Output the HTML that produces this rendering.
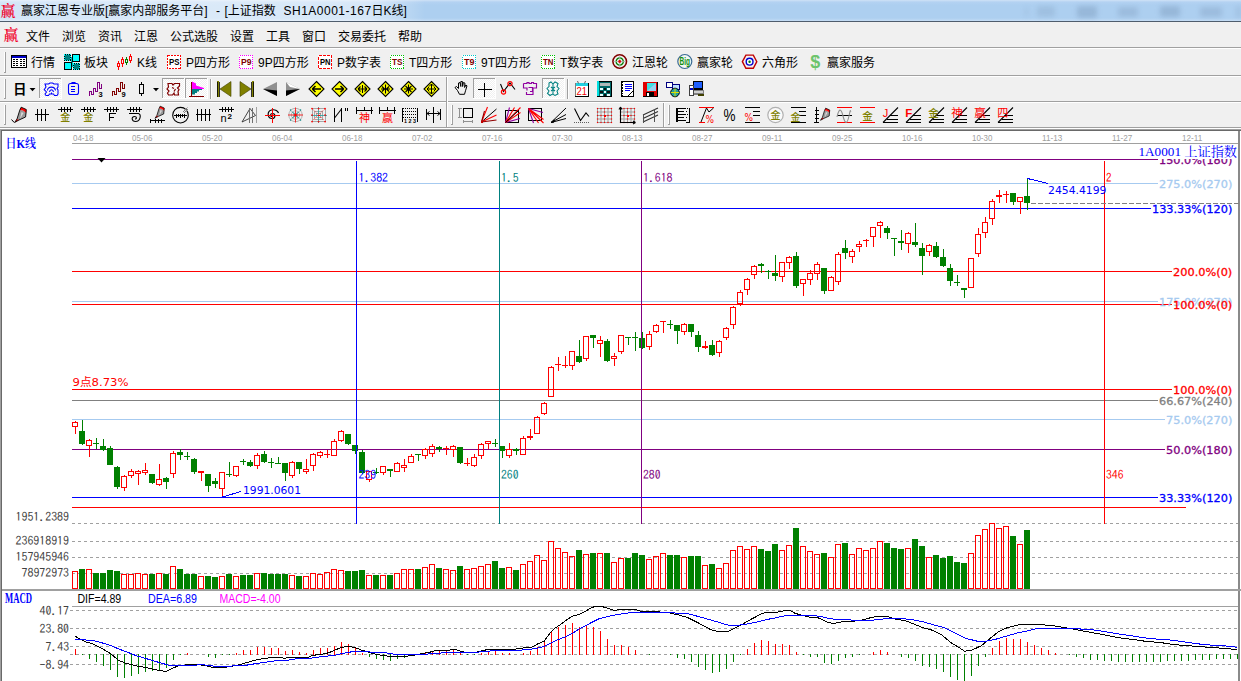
<!DOCTYPE html><html lang="zh"><head><meta charset="utf-8"><title>赢家江恩专业版</title><style>

html,body{margin:0;padding:0;background:#f0f0f0;}
body{width:1241px;height:681px;overflow:hidden;position:relative;font-family:"Liberation Sans","Noto Sans CJK SC",sans-serif;font-size:12px;color:#000;}
.abs{position:absolute;white-space:nowrap;}
#title{left:0;top:0;width:1241px;height:21px;background:linear-gradient(#cfe2f6 0px,#b4d2f2 2px,#adcff0 5px,#adcff0 18px,#bbd7f3 20px,#c9dff5 21px);}
#tline{left:0;top:21px;width:1241px;height:1px;background:#4f5d6d;}
#glow{left:0;top:0;width:440px;height:21px;background:linear-gradient(to right,rgba(255,255,255,.45) 0,rgba(255,255,255,.55) 200px,rgba(255,255,255,.5) 370px,rgba(255,255,255,0) 425px);}
.t{font-size:12px;line-height:14px;height:14px;}
.sep{left:0;width:1241px;height:1px;}
svg{position:absolute;left:0;top:0;}
svg text{white-space:pre;}

</style></head><body>
<div class="abs" id="title"></div><div class="abs" id="glow"></div><div class="abs" id="tline"></div>
<svg width="1241" height="22" style="filter:blur(2.4px)">
<rect x="1025" y="7" width="3" height="10" rx="3" fill="#5a7596" opacity="0.12"/>
<rect x="1037" y="6" width="18" height="11" rx="3" fill="#5a7596" opacity="0.16"/>
<rect x="1077" y="6" width="20" height="12" rx="3" fill="#5a7596" opacity="0.26"/>
<rect x="1118" y="7" width="20" height="10" rx="3" fill="#5a7596" opacity="0.2"/>
<rect x="1160" y="6" width="20" height="11" rx="3" fill="#5a7596" opacity="0.26"/>
<rect x="1200" y="7" width="22" height="10" rx="3" fill="#5a7596" opacity="0.2"/>
<rect x="1236" y="6" width="5" height="12" rx="3" fill="#5a7596" opacity="0.15"/>
</svg>
<div class="abs" style="left:0.5px;top:3px;font-size:15px;line-height:16px;color:#f0002c;font-family:'Liberation Serif','Noto Serif CJK SC',serif;font-weight:600">赢</div>
<div class="abs t" style="left:21px;top:4px;">赢家江恩专业版[赢家内部服务平台]</div>
<div class="abs t" style="left:216px;top:4px;">-</div>
<div class="abs t" style="left:224.5px;top:4px;">[上证指数</div>
<div class="abs t" style="left:283.5px;top:4px;letter-spacing:0.5px">SH1A0001-167</div>
<div class="abs t" style="left:371.5px;top:4px;">日K线]</div>
<div class="abs" style="left:0;top:22px;width:1241px;height:25px;background:#f0f0f0"></div>
<div class="abs sep" style="top:47px;background:#a0a0a0"></div><div class="abs sep" style="top:48px;background:#fff"></div>
<div class="abs" style="left:3.5px;top:27px;font-size:15px;line-height:16px;color:#f0002c;font-family:'Liberation Serif','Noto Serif CJK SC',serif;font-weight:600">赢</div>
<div class="abs t" style="left:26px;top:29.5px;">文件</div>
<div class="abs t" style="left:62px;top:29.5px;">浏览</div>
<div class="abs t" style="left:98px;top:29.5px;">资讯</div>
<div class="abs t" style="left:134px;top:29.5px;">江恩</div>
<div class="abs t" style="left:170px;top:29.5px;">公式选股</div>
<div class="abs t" style="left:230px;top:29.5px;">设置</div>
<div class="abs t" style="left:266px;top:29.5px;">工具</div>
<div class="abs t" style="left:302px;top:29.5px;">窗口</div>
<div class="abs t" style="left:338px;top:29.5px;">交易委托</div>
<div class="abs t" style="left:398px;top:29.5px;">帮助</div>
<div class="abs sep" style="top:75px;background:#a0a0a0"></div><div class="abs sep" style="top:76px;background:#fff"></div>
<div class="abs sep" style="top:101px;background:#a0a0a0"></div><div class="abs sep" style="top:102px;background:#fff"></div>
<div class="abs sep" style="top:127px;background:#a0a0a0"></div><div class="abs sep" style="top:128px;background:#fff"></div>
<div class="abs t" style="left:31px;top:56.3px;">行情</div>
<div class="abs t" style="left:84px;top:56.3px;">板块</div>
<div class="abs t" style="left:137px;top:56.3px;">K线</div>
<div class="abs t" style="left:186px;top:56.3px;">P四方形</div>
<div class="abs t" style="left:258px;top:56.3px;">9P四方形</div>
<div class="abs t" style="left:337px;top:56.3px;">P数字表</div>
<div class="abs t" style="left:409px;top:56.3px;">T四方形</div>
<div class="abs t" style="left:481px;top:56.3px;">9T四方形</div>
<div class="abs t" style="left:560px;top:56.3px;">T数字表</div>
<div class="abs t" style="left:632px;top:56.3px;">江恩轮</div>
<div class="abs t" style="left:697px;top:56.3px;">赢家轮</div>
<div class="abs t" style="left:762px;top:56.3px;">六角形</div>
<div class="abs t" style="left:827px;top:56.3px;">赢家服务</div>
<svg width="1241" height="130" viewBox="0 0 1241 130">
<rect x="4" y="52" width="1" height="20" fill="#fff"/><rect x="5" y="52" width="1" height="20" fill="#a0a0a0"/><rect x="4" y="72" width="2" height="1" fill="#a0a0a0"/>
<rect x="4" y="79" width="1" height="19" fill="#fff"/><rect x="5" y="79" width="1" height="19" fill="#a0a0a0"/><rect x="4" y="98" width="2" height="1" fill="#a0a0a0"/>
<rect x="4" y="105" width="1" height="19" fill="#fff"/><rect x="5" y="105" width="1" height="19" fill="#a0a0a0"/><rect x="4" y="124" width="2" height="1" fill="#a0a0a0"/>
<rect x="210" y="79" width="1" height="20" fill="#a0a0a0"/><rect x="211" y="79" width="1" height="20" fill="#fff"/>
<rect x="567" y="79" width="1" height="20" fill="#a0a0a0"/><rect x="568" y="79" width="1" height="20" fill="#fff"/>
<rect x="446" y="77" width="1" height="50" fill="#a0a0a0"/><rect x="447" y="77" width="1" height="50" fill="#fff"/>
<rect x="451" y="105" width="1" height="19" fill="#fff"/><rect x="452" y="105" width="1" height="19" fill="#a0a0a0"/><rect x="451" y="124" width="2" height="1" fill="#a0a0a0"/>
<rect x="663" y="103" width="1" height="24" fill="#a0a0a0"/><rect x="664" y="103" width="1" height="24" fill="#fff"/>
<rect x="668" y="105" width="1" height="19" fill="#fff"/><rect x="669" y="105" width="1" height="19" fill="#a0a0a0"/><rect x="668" y="124" width="2" height="1" fill="#a0a0a0"/>
<defs><pattern id="dither" width="2" height="2" patternUnits="userSpaceOnUse"><rect width="2" height="2" fill="#f0f0f0"/><rect width="1" height="1" fill="#fff"/><rect x="1" y="1" width="1" height="1" fill="#fff"/></pattern></defs><g transform="translate(11,55)"><rect x="0" y="0" width="16" height="13" fill="#000" shape-rendering="crispEdges"/><rect x="1" y="1" width="14" height="11" fill="#fff" shape-rendering="crispEdges"/><rect x="1" y="1" width="14" height="2" fill="#0000c8" shape-rendering="crispEdges"/><rect x="2" y="4" width="2" height="1" fill="#000" shape-rendering="crispEdges"/><rect x="5" y="4" width="2" height="1" fill="#000" shape-rendering="crispEdges"/><rect x="9" y="4" width="2" height="1" fill="#000" shape-rendering="crispEdges"/><rect x="12" y="4" width="2" height="1" fill="#000" shape-rendering="crispEdges"/><rect x="2" y="6" width="2" height="1" fill="#000" shape-rendering="crispEdges"/><rect x="5" y="6" width="2" height="1" fill="#000" shape-rendering="crispEdges"/><rect x="9" y="6" width="2" height="1" fill="#000" shape-rendering="crispEdges"/><rect x="12" y="6" width="2" height="1" fill="#000" shape-rendering="crispEdges"/><rect x="2" y="8" width="2" height="1" fill="#000" shape-rendering="crispEdges"/><rect x="5" y="8" width="2" height="1" fill="#000" shape-rendering="crispEdges"/><rect x="9" y="8" width="2" height="1" fill="#000" shape-rendering="crispEdges"/><rect x="12" y="8" width="2" height="1" fill="#000" shape-rendering="crispEdges"/><rect x="2" y="10" width="2" height="1" fill="#000" shape-rendering="crispEdges"/><rect x="5" y="10" width="2" height="1" fill="#000" shape-rendering="crispEdges"/><rect x="9" y="10" width="2" height="1" fill="#000" shape-rendering="crispEdges"/><rect x="12" y="10" width="2" height="1" fill="#000" shape-rendering="crispEdges"/></g><g transform="translate(64,54)"><rect x="0" y="0" width="7" height="7" fill="#00ffff" shape-rendering="crispEdges"/><rect x="9" y="9" width="7" height="7" fill="#00ffff" shape-rendering="crispEdges"/><rect x="1" y="1" width="5" height="5" fill="#008080" shape-rendering="crispEdges"/><rect x="10" y="10" width="5" height="5" fill="#008080" shape-rendering="crispEdges"/><path d="M0.500 0.500h6v6h-6zM9.500 9.500h6v6h-6z" stroke="#000" stroke-width="1" fill="none" shape-rendering="crispEdges" stroke-dasharray="1 1"/><rect x="8" y="0" width="8" height="8" fill="#000" shape-rendering="crispEdges"/><rect x="9" y="1" width="6" height="6" fill="#00ffff" shape-rendering="crispEdges"/><rect x="0" y="8" width="8" height="8" fill="#000" shape-rendering="crispEdges"/><rect x="1" y="9" width="6" height="6" fill="#00ffff" shape-rendering="crispEdges"/><rect x="7" y="3" width="1" height="5" fill="#00c0c0" shape-rendering="crispEdges"/><rect x="8" y="8" width="1" height="5" fill="#00c0c0" shape-rendering="crispEdges"/></g><g transform="translate(116,54)"><rect x="2" y="7" width="1" height="9" fill="#ff0000" shape-rendering="crispEdges"/><rect x="1" y="9" width="3" height="4" fill="#ff0000" shape-rendering="crispEdges"/><rect x="2" y="10" width="1" height="2" fill="#f0f0f0" shape-rendering="crispEdges"/><rect x="6" y="3" width="1" height="10" fill="#ff0000" shape-rendering="crispEdges"/><rect x="5" y="5" width="3" height="5" fill="#ff0000" shape-rendering="crispEdges"/><rect x="6" y="6" width="1" height="3" fill="#f0f0f0" shape-rendering="crispEdges"/><rect x="10" y="3" width="1" height="8" fill="#008000" shape-rendering="crispEdges"/><rect x="9" y="5" width="3" height="4" fill="#008000" shape-rendering="crispEdges"/><rect x="10" y="6" width="1" height="2" fill="#f0f0f0" shape-rendering="crispEdges"/><rect x="14" y="0" width="1" height="9" fill="#ff0000" shape-rendering="crispEdges"/><rect x="13" y="2" width="3" height="5" fill="#ff0000" shape-rendering="crispEdges"/><rect x="14" y="3" width="1" height="3" fill="#f0f0f0" shape-rendering="crispEdges"/></g><g transform="translate(167,55)"><rect x="0" y="0" width="14" height="14" fill="#fff" shape-rendering="crispEdges"/><path d="M0.5 0.5H13.5V13.5H0.5Z" stroke="#ff0000" stroke-width="1" fill="none" shape-rendering="crispEdges" stroke-dasharray="2 1"/><text x="7.2" y="10.4" font-size="9" fill="#000" font-weight="bold" font-family="'Liberation Sans',sans-serif" text-anchor="middle" textLength="10.500" lengthAdjust="spacingAndGlyphs">PS</text></g><g transform="translate(239,55)"><rect x="0" y="0" width="14" height="14" fill="#fff" shape-rendering="crispEdges"/><path d="M0.5 0.5H13.5V13.5H0.5Z" stroke="#ff00ff" stroke-width="1" fill="none" shape-rendering="crispEdges" stroke-dasharray="1 1"/><text x="7.2" y="10.4" font-size="9" fill="#800000" font-weight="bold" font-family="'Liberation Sans',sans-serif" text-anchor="middle" textLength="10.500" lengthAdjust="spacingAndGlyphs">P9</text></g><g transform="translate(318,55)"><rect x="0" y="0" width="14" height="14" fill="#fff" shape-rendering="crispEdges"/><path d="M0.5 0.5H13.5V13.5H0.5Z" stroke="#ff0000" stroke-width="1" fill="none" shape-rendering="crispEdges" stroke-dasharray="3 1"/><text x="7.2" y="10.4" font-size="9" fill="#000" font-weight="bold" font-family="'Liberation Sans',sans-serif" text-anchor="middle" textLength="10.500" lengthAdjust="spacingAndGlyphs">PN</text></g><g transform="translate(390,55)"><rect x="0" y="0" width="14" height="14" fill="#fff" shape-rendering="crispEdges"/><path d="M0.5 0.5H13.5V13.5H0.5Z" stroke="#00c000" stroke-width="1" fill="none" shape-rendering="crispEdges" stroke-dasharray="1 1"/><text x="7.2" y="10.4" font-size="9" fill="#800000" font-weight="bold" font-family="'Liberation Sans',sans-serif" text-anchor="middle" textLength="10.500" lengthAdjust="spacingAndGlyphs">TS</text></g><g transform="translate(462,55)"><rect x="0" y="0" width="14" height="14" fill="#fff" shape-rendering="crispEdges"/><path d="M0.5 0.5H13.5V13.5H0.5Z" stroke="#00c8c8" stroke-width="1" fill="none" shape-rendering="crispEdges" stroke-dasharray="1 1"/><text x="7.2" y="10.4" font-size="9" fill="#800000" font-weight="bold" font-family="'Liberation Sans',sans-serif" text-anchor="middle" textLength="10.500" lengthAdjust="spacingAndGlyphs">T9</text></g><g transform="translate(541,55)"><rect x="0" y="0" width="14" height="14" fill="#fff" shape-rendering="crispEdges"/><path d="M0.5 0.5H13.5V13.5H0.5Z" stroke="#00c000" stroke-width="1" fill="none" shape-rendering="crispEdges" stroke-dasharray="1 1"/><text x="7.2" y="10.4" font-size="9" fill="#800000" font-weight="bold" font-family="'Liberation Sans',sans-serif" text-anchor="middle" textLength="10.500" lengthAdjust="spacingAndGlyphs">TN</text></g><g transform="translate(619.7,61.5)"><circle cx="0" cy="0" r="6.8" fill="#f0f0f0" stroke="#800000" stroke-width="1.6"/><circle cx="0" cy="0" r="3.6" fill="none" stroke="#008000" stroke-width="1.3"/><path d="M-6 0H6M0 -6V6" stroke="#b0b0b0" stroke-width="0.8" fill="none"/><circle cx="0" cy="0" r="1.4" fill="#e00000"/></g><g transform="translate(684.8,61.5)"><circle cx="0" cy="0" r="7" fill="#f4f8f4" stroke="#3a6a94" stroke-width="1.2"/><text x="0" y="3.2" font-size="10.5" fill="#109010" font-weight="bold" font-family="'Liberation Sans',sans-serif" text-anchor="middle" textLength="10.5" lengthAdjust="spacingAndGlyphs">Big</text></g><g transform="translate(749.6,61.7)"><path d="M-7.2 0L-3.7 -6.6H3.7L7.2 0L3.7 6.6H-3.7Z" stroke="#c00000" stroke-width="1.4" fill="#f6f0f0"/><circle cx="0" cy="0" r="3.4" fill="#fff" stroke="#0000d0" stroke-width="1.4"/><circle cx="0" cy="0" r="1.2" fill="#008000"/></g><text x="815.3" y="67.6" font-size="18" fill="#6cc46c" font-weight="bold" font-family="'Liberation Sans',sans-serif" text-anchor="middle">$</text>
<text x="13.2" y="93.6" font-size="13.2" fill="#000" font-weight="bold" font-family="'Liberation Sans','Noto Sans CJK SC',sans-serif">日</text><path d="M29.500 88h6l-3 3.200z" stroke="#000" stroke-width="0" fill="#000"/><rect x="39" y="78" width="23" height="21" fill="url(#dither)" shape-rendering="crispEdges"/><rect x="39" y="78" width="23" height="1" fill="#a0a0a0" shape-rendering="crispEdges"/><rect x="39" y="78" width="1" height="21" fill="#a0a0a0" shape-rendering="crispEdges"/><rect x="39" y="98" width="23" height="1" fill="#fff" shape-rendering="crispEdges"/><rect x="61" y="78" width="1" height="21" fill="#fff" shape-rendering="crispEdges"/><rect x="162" y="78" width="23" height="21" fill="url(#dither)" shape-rendering="crispEdges"/><rect x="162" y="78" width="23" height="1" fill="#a0a0a0" shape-rendering="crispEdges"/><rect x="162" y="78" width="1" height="21" fill="#a0a0a0" shape-rendering="crispEdges"/><rect x="162" y="98" width="23" height="1" fill="#fff" shape-rendering="crispEdges"/><rect x="184" y="78" width="1" height="21" fill="#fff" shape-rendering="crispEdges"/><rect x="185" y="78" width="23" height="21" fill="url(#dither)" shape-rendering="crispEdges"/><rect x="185" y="78" width="23" height="1" fill="#a0a0a0" shape-rendering="crispEdges"/><rect x="185" y="78" width="1" height="21" fill="#a0a0a0" shape-rendering="crispEdges"/><rect x="185" y="98" width="23" height="1" fill="#fff" shape-rendering="crispEdges"/><rect x="207" y="78" width="1" height="21" fill="#fff" shape-rendering="crispEdges"/><rect x="473" y="78" width="23" height="21" fill="url(#dither)" shape-rendering="crispEdges"/><rect x="473" y="78" width="23" height="1" fill="#a0a0a0" shape-rendering="crispEdges"/><rect x="473" y="78" width="1" height="21" fill="#a0a0a0" shape-rendering="crispEdges"/><rect x="473" y="98" width="23" height="1" fill="#fff" shape-rendering="crispEdges"/><rect x="495" y="78" width="1" height="21" fill="#fff" shape-rendering="crispEdges"/><rect x="542" y="78" width="23" height="21" fill="url(#dither)" shape-rendering="crispEdges"/><rect x="542" y="78" width="23" height="1" fill="#a0a0a0" shape-rendering="crispEdges"/><rect x="542" y="78" width="1" height="21" fill="#a0a0a0" shape-rendering="crispEdges"/><rect x="542" y="98" width="23" height="1" fill="#fff" shape-rendering="crispEdges"/><rect x="564" y="78" width="1" height="21" fill="#fff" shape-rendering="crispEdges"/><g transform="translate(42,81)"><path d="M3 3H6.5L8 2H10.5L12 3H16V6L15 7.5 16 9V13L15 14.500H12.500L11.500 13H7.500L6.500 14.500H4L3 13 4.500 11 2.200 8.600 4 6Z" stroke="#0000ff" stroke-width="1.05" fill="none"/><path d="M5.500 9.500C5.500 5 13 5 13.500 9.500M7.500 11C8 8 11 8 11.500 11M9.500 11.500V13" stroke="#0000ff" stroke-width="1.05" fill="none"/></g><g transform="translate(65,81)"><rect x="3.500" y="2.500" width="10" height="11" rx="2" fill="none" stroke="#0000ff" stroke-width="1.100"/><path d="M7 2.500v-1h3v1" stroke="#0000ff" stroke-width="1.1" fill="none"/><path d="M6 5.500h4M6 8.500h4M6 10.500h4" stroke="#0000ff" stroke-width="1" fill="none" shape-rendering="crispEdges"/></g><g transform="translate(88,81)"><path d="M1.500 15V10.500H3.500V13.500H5.500V7.500H7.500V10.500H9.500V1.500H11.500V7.500H13.500V3" stroke="#800080" stroke-width="1.15" fill="none" shape-rendering="crispEdges"/><text x="10.6" y="15.8" font-size="7.5" fill="#000" font-weight="bold" font-family="'Liberation Sans',sans-serif">3</text></g><g transform="translate(111,81)"><path d="M1.500 15V10.500H3.500V13.500H5.500V7.500H7.500V10.500H9.500V1.500H11.500V7.500H13.500V3" stroke="#800000" stroke-width="1.15" fill="none" shape-rendering="crispEdges"/><text x="10.6" y="15.8" font-size="7.5" fill="#000" font-weight="bold" font-family="'Liberation Sans',sans-serif">9</text></g><g transform="translate(134,81)"><path d="M7.500 1v2M7.500 13v2M5.500 3.500h4v9h-4z" stroke="#000" stroke-width="1.3" fill="none" shape-rendering="crispEdges"/></g><path d="M153 88h6l-3 3.2z" stroke="#000" stroke-width="0" fill="#000"/><g transform="translate(165,81)"><path d="M3 2.5h4l1 1.5 1.5-1.5h5v2.5l-2 2 1.5 1.5-1 2 .5 3.5h-4l-.5-2-1.5 2h-4l-1-2 1.5-2-2-2 1.5-2z M7 6.5l2 1M9 10.5l1.5-2.5" stroke="#800000" stroke-width="1.2" fill="none"/></g><g transform="translate(188,81)"><path d="M3.500 0.500v15" stroke="#800000" stroke-width="1.2" fill="none" shape-rendering="crispEdges"/><path d="M1 15.500h15" stroke="#800000" stroke-width="1.2" fill="none" shape-rendering="crispEdges"/><path d="M4 0.500l4 2v2l8 2.500v1h-12z" stroke="#ff00ff" stroke-width="0" fill="#ff00ff"/><path d="M4 8h10v1h-3v1.500h-2v1.500h-2v1.500h-3z" stroke="#008080" stroke-width="0" fill="#008080"/></g><g transform="translate(216,81)"><rect x="1" y="0" width="2" height="16" fill="#808000" shape-rendering="crispEdges"/><path d="M1.5 0.5v15M3.5 .5v15" stroke="#000" stroke-width="0.8" fill="none" shape-rendering="crispEdges"/><path d="M15 0.5v15l-11-7.5z" stroke="#808000" stroke-width="0" fill="#808000"/><path d="M15 0.5v15l-11-7.5z" stroke="#404000" stroke-width="0.6" fill="none"/></g><g transform="translate(239,81)"><rect x="13" y="0" width="2" height="16" fill="#808000" shape-rendering="crispEdges"/><path d="M12.5 0.5v15M14.5 .5v15" stroke="#000" stroke-width="0.8" fill="none" shape-rendering="crispEdges"/><path d="M1 0.5v15l11-7.5z" stroke="#808000" stroke-width="0" fill="#808000"/><path d="M1 0.5v15l11-7.5z" stroke="#404000" stroke-width="0.6" fill="none"/></g><g transform="translate(262,81)"><path d="M15 1v14l-14-7z" stroke="#909090" stroke-width="0" fill="#909090"/><path d="M15 15l-14-7 14 1.5z" stroke="#000" stroke-width="0" fill="#000"/></g><g transform="translate(285,81)"><path d="M1 1v14l14-7z" stroke="#909090" stroke-width="0" fill="#909090"/><path d="M1 15l14-7-14 1.5z" stroke="#000" stroke-width="0" fill="#000"/><path d="M1 1l14 7-10-2z" stroke="#fff" stroke-width="0" fill="#fff"/></g><g transform="translate(308.5,81)"><path d="M8 0.5L15.5 8 8 15.5 0.5 8z" stroke="#000" stroke-width="1.1" fill="#ffff00"/><path d="M4 8h8.500M3.800 8l3.200-3M3.800 8l3.200 3" stroke="#000" stroke-width="1.5" fill="none"/></g><g transform="translate(331.5,81)"><path d="M8 0.5L15.5 8 8 15.5 0.5 8z" stroke="#000" stroke-width="1.1" fill="#ffff00"/><path d="M3.500 8h8.500M12.200 8l-3.200-3M12.200 8l-3.200 3" stroke="#000" stroke-width="1.5" fill="none"/></g><g transform="translate(354.5,81)"><path d="M8 0.5L15.5 8 8 15.5 0.5 8z" stroke="#000" stroke-width="1.1" fill="#ffff00"/><path d="M3.5 8h9M3.5 8l2.5-2.5M3.5 8l2.5 2.5M12.5 8l-2.5-2.5M12.5 8l-2.5 2.5M8 4v8" stroke="#000" stroke-width="1.1" fill="none"/></g><g transform="translate(377.5,81)"><path d="M8 0.5L15.5 8 8 15.5 0.5 8z" stroke="#000" stroke-width="1.1" fill="#ffff00"/><path d="M3.5 8h9M7 8l-2.5-2.5M7 8l-2.5 2.5M9 8l2.5-2.5M9 8l2.5 2.5M8 3.5v9" stroke="#000" stroke-width="1.1" fill="none"/></g><g transform="translate(400.5,81)"><path d="M8 0.5L15.5 8 8 15.5 0.5 8z" stroke="#000" stroke-width="1.1" fill="#ffff00"/><path d="M3.5 8h9M8 3.5v9M5 5l6 6M11 5l-6 6" stroke="#000" stroke-width="1.1" fill="none"/></g><g transform="translate(423.5,81)"><path d="M8 0.5L15.5 8 8 15.5 0.5 8z" stroke="#000" stroke-width="1.1" fill="#ffff00"/><path d="M3.5 8h9M8 3v10M8 3l-2.5 2.5M8 3l2.5 2.5M8 13l-2.5-2.5M8 13l2.5-2.5M3.5 8l2-2M3.5 8l2 2M12.5 8l-2-2M12.5 8l-2 2" stroke="#000" stroke-width="1" fill="none"/></g><g transform="translate(453,81)"><path d="M4.5 9.5l-2.5-3 1.5-1 2 2v-5.5l1.5-.5.8 4v-5l1.6 0 .2 5 .8-4 1.5.5-.3 4.5 1.2-2.5 1.2.8-1.5 5-1 3.5h-5z" stroke="#000" stroke-width="1" fill="none"/></g><g transform="translate(476,81)"><path d="M8.5 1.5v14M1.5 8.5h14" stroke="#000" stroke-width="1.2" fill="none" shape-rendering="crispEdges"/></g><g transform="translate(499,81)"><path d="M1.5 3l3 7.5 6.5-8.5 5 6.5" stroke="#000" stroke-width="1.1" fill="none"/><circle cx="4.5" cy="11" r="2.1" fill="none" stroke="#ff0000" stroke-width="1.2"/><circle cx="11" cy="2.6" r="2.1" fill="none" stroke="#ff0000" stroke-width="1.2"/></g><g transform="translate(522,81)"><path d="M1.500 2.500h3.500v-1h2v1h2.500v-1h2v1h3v4.500h-3.500v6.500h-6.500v-2.500M1.500 2.500v4.500h3.500v2.500M6.500 6.500h4v4h-2.500" stroke="#9000a0" stroke-width="1.15" fill="none"/></g><g transform="translate(545,81)"><path d="M4 2l2-1 2 2 2-2 3 1.5-1 3 2 2-2 2.5 1 3-3 1.5-2.5-1.5-2.5 1.5-2.5-2 1.5-2.5-2-2.5 2-2z M6 6l2 1.5 2-1.5M6 10l2-1.5 2 1.5M8 3v10" stroke="#008080" stroke-width="1.05" fill="none"/></g><g transform="translate(573,81)"><rect x="2" y="2" width="14" height="14" fill="#000" shape-rendering="crispEdges"/><rect x="2" y="2" width="13" height="13" fill="#fff" shape-rendering="crispEdges"/><rect x="2" y="2" width="1" height="13" fill="#808080" shape-rendering="crispEdges"/><rect x="3" y="2" width="12" height="3" fill="#20d0e0" shape-rendering="crispEdges"/><path d="M4.500 0l1 2.500M12.500 0l-1 2.500" stroke="#606060" stroke-width="1" fill="none"/><text x="8.8" y="13.8" font-size="10.5" fill="#f00000" font-weight="normal" font-family="'Liberation Sans',sans-serif" text-anchor="middle" textLength="10.500" lengthAdjust="spacingAndGlyphs">21</text></g><g transform="translate(596,81)"><rect x="1" y="0" width="15" height="16" fill="#000" shape-rendering="crispEdges"/><rect x="1" y="0" width="2" height="15" fill="#00e0e0" shape-rendering="crispEdges"/><rect x="3" y="1" width="12" height="14" fill="#006868" shape-rendering="crispEdges"/><rect x="4" y="2" width="10" height="3" fill="#b0b8b8" shape-rendering="crispEdges"/><rect x="4.0" y="7" width="2.5" height="2" fill="#e8ffff" shape-rendering="crispEdges"/><rect x="7.5" y="7" width="2.5" height="2" fill="#101010" shape-rendering="crispEdges"/><rect x="11.0" y="7" width="2.5" height="2" fill="#e8ffff" shape-rendering="crispEdges"/><rect x="4.0" y="10" width="2.5" height="2" fill="#101010" shape-rendering="crispEdges"/><rect x="7.5" y="10" width="2.5" height="2" fill="#e8ffff" shape-rendering="crispEdges"/><rect x="11.0" y="10" width="2.5" height="2" fill="#101010" shape-rendering="crispEdges"/><rect x="4.0" y="13" width="2.5" height="2" fill="#e8ffff" shape-rendering="crispEdges"/><rect x="7.5" y="13" width="2.5" height="2" fill="#101010" shape-rendering="crispEdges"/><rect x="11.0" y="13" width="2.5" height="2" fill="#e8ffff" shape-rendering="crispEdges"/></g><g transform="translate(619,81)"><rect x="2" y="0" width="13" height="16" fill="#000" shape-rendering="crispEdges"/><rect x="4" y="1" width="10" height="14" fill="#fff" shape-rendering="crispEdges"/><path d="M6 3.5h7M6 5.5h7M6 7.5h7M6 9.5h5" stroke="#0000ff" stroke-width="1" fill="none" shape-rendering="crispEdges"/><path d="M3 2.5h2M3 5.5h2M3 8.5h2M3 11.5h2M3 13.5h2" stroke="#fff" stroke-width="1" fill="none" shape-rendering="crispEdges"/><path d="M9 15l5-5" stroke="#000" stroke-width="1" fill="none"/></g><g transform="translate(642,81)"><rect x="1" y="1" width="15" height="15" fill="#000" shape-rendering="crispEdges"/><rect x="1" y="1" width="14" height="14" fill="#e00000" shape-rendering="crispEdges"/><rect x="5" y="2" width="9" height="8" fill="#40e0e0" shape-rendering="crispEdges"/><path d="M5 10l9-8v8z" stroke="#a0d8f8" stroke-width="0" fill="#9ad0f0"/><rect x="4" y="11" width="8" height="4" fill="#000" shape-rendering="crispEdges"/><rect x="5" y="12" width="2" height="3" fill="#fff" shape-rendering="crispEdges"/></g><g transform="translate(665,81)"><rect x="1" y="1" width="7" height="6" fill="#000080" shape-rendering="crispEdges"/><rect x="2" y="2" width="5" height="4" fill="#fff" shape-rendering="crispEdges"/><rect x="7" y="3" width="8" height="6" fill="#000080" shape-rendering="crispEdges"/><rect x="8" y="4" width="6" height="4" fill="#c0e0ff" shape-rendering="crispEdges"/><circle cx="10" cy="11.5" r="4.3" fill="#20a0a0" stroke="#000" stroke-width="1"/><path d="M6 11.5h8M10 7.5v8" stroke="#e0e000" stroke-width="1" fill="none"/></g><g transform="translate(688,81)"><rect x="5" y="0" width="10" height="9" fill="#000" shape-rendering="crispEdges"/><rect x="6" y="1" width="8" height="6" fill="#2060ff" shape-rendering="crispEdges"/><rect x="3" y="9" width="13" height="5" fill="#808080" shape-rendering="crispEdges"/><rect x="4" y="10" width="11" height="2" fill="#d0d0d0" shape-rendering="crispEdges"/><rect x="1" y="4" width="5" height="11" fill="#fff" shape-rendering="crispEdges"/><path d="M1.5 4.5h4v10h-4z" stroke="#404040" stroke-width="1" fill="none" shape-rendering="crispEdges"/><rect x="2" y="7" width="3" height="2" fill="#0000c0" shape-rendering="crispEdges"/><rect x="10" y="13" width="6" height="2" fill="#404000" shape-rendering="crispEdges"/></g>
<g transform="translate(11,107)"><g transform="translate(0,0)"><g transform="scale(1)"><path d="M8.800 3.100L12 3.500 15.300 6 14.600 10 8 13 6 12z" stroke="#909090" stroke-width="0" fill="#9a9a9a"/><path d="M10.500 5l2 1-3.500 6z" stroke="#d8d8d8" stroke-width="0" fill="#d8d8d8"/><path d="M10.200 0.200L15.300 2.500V6L12 3.500 8.800 3.100z" stroke="#ff0000" stroke-width="0" fill="#ff0000"/><path d="M6 12l2 1-4.300 2.400z" stroke="#ff0000" stroke-width="0" fill="#ff0000"/><path d="M10.200 0.200L15.300 2.500 14.600 10 8 13 3.700 15.400 6 12 8.800 3.100z" stroke="#000" stroke-width="0.9" fill="none"/></g></g><path d="M0.500 12.500l2.700 3" stroke="#000" stroke-width="1" fill="none"/></g><g transform="translate(34,107)"><path d="M3.5 2v12M7.5 2v12M11.5 2v12M1 7.5h14" stroke="#000" stroke-width="1.2" fill="none" shape-rendering="crispEdges"/></g><g transform="translate(57,107)"><path d="M0.5 2.5H16M4.500 0.0v4.5M7.500 0.0v4.5M10.500 0.0v4.5M13.500 0.0v4.5" stroke="#000" stroke-width="1" fill="none" shape-rendering="crispEdges"/><text x="8.2" y="14.2" font-size="10" fill="#808000" font-weight="500" font-family="'Liberation Sans','Noto Sans CJK SC',sans-serif" text-anchor="middle">金</text></g><g transform="translate(80,107)"><path d="M0.5 2.5H16M4.500 0.0v4.5M7.500 0.0v4.5M10.500 0.0v4.5M13.500 0.0v4.5" stroke="#000" stroke-width="1" fill="none" shape-rendering="crispEdges"/><text x="8.2" y="14.2" font-size="10" fill="#808000" font-weight="500" font-family="'Liberation Sans','Noto Sans CJK SC',sans-serif" text-anchor="middle">金</text></g><g transform="translate(103,107)"><path d="M0.5 2.5H16M4.500 0.0v4.5M7.500 0.0v4.5M10.500 0.0v4.5M13.500 0.0v4.5" stroke="#000" stroke-width="1" fill="none" shape-rendering="crispEdges"/><path d="M6.5 14v-7.5h6M6.5 10.5h4.5" stroke="#000" stroke-width="1.3" fill="none" shape-rendering="crispEdges"/></g><g transform="translate(126,107)"><path d="M0.5 2.5H16M4.500 0.0v4.5M7.500 0.0v4.5M10.500 0.0v4.5M13.500 0.0v4.5" stroke="#000" stroke-width="1" fill="none" shape-rendering="crispEdges"/><path d="M3 6.5h9.5c3 1 2 8-3 8-4 0-4.5-5-1-5 2.5 0 2.5 2.5.5 2.5" stroke="#000" stroke-width="1.1" fill="none"/></g><g transform="translate(149,107)"><g transform="translate(3,-1)"><g transform="scale(0.8)"><path d="M8.800 3.100L12 3.500 15.300 6 14.600 10 8 13 6 12z" stroke="#909090" stroke-width="0" fill="#9a9a9a"/><path d="M10.500 5l2 1-3.500 6z" stroke="#d8d8d8" stroke-width="0" fill="#d8d8d8"/><path d="M10.200 0.200L15.300 2.500V6L12 3.500 8.800 3.100z" stroke="#ff0000" stroke-width="0" fill="#ff0000"/><path d="M6 12l2 1-4.300 2.400z" stroke="#ff0000" stroke-width="0" fill="#ff0000"/><path d="M10.200 0.200L15.300 2.500 14.600 10 8 13 3.700 15.400 6 12 8.800 3.100z" stroke="#000" stroke-width="0.9" fill="none"/></g></g><path d="M1 13.5h15M6.500 11.5v4M9.5 11.500v4M12.5 11.5v4M1.5 11.5v4" stroke="#000" stroke-width="1" fill="none" shape-rendering="crispEdges"/></g><g transform="translate(172,107)"><circle cx="8.500" cy="8.200" r="7.800" fill="none" stroke="#000" stroke-width="1.100"/><path d="M2 8.500h13M4.5 6.5v4M6.5 7v3M8.5 6.5v4M10.5 7v3M12.5 6.5v4" stroke="#000" stroke-width="1" fill="none" shape-rendering="crispEdges"/><path d="M11 5l4.500-4.500M12 6l4-4" stroke="#808080" stroke-width="1" fill="none"/></g><g transform="translate(195,107)"><path d="M2.5 2v12M6.5 2v12M10.5 2v12M14.5 2v12M1 7.5h15" stroke="#000" stroke-width="1.2" fill="none" shape-rendering="crispEdges"/></g><g transform="translate(218,107)"><path d="M0.5 2.5H16M4.500 0.0v4.5M7.500 0.0v4.5M10.500 0.0v4.5M13.500 0.0v4.5" stroke="#000" stroke-width="1" fill="none" shape-rendering="crispEdges"/><text x="2.5" y="15" font-size="11" fill="#000" font-weight="normal" font-family="'Liberation Sans',sans-serif">n</text><text x="9.5" y="11.5" font-size="8" fill="#000" font-weight="bold" font-family="'Liberation Sans',sans-serif">2</text></g><g transform="translate(241,107)"><path d="M1 15l8-13.500 5.500 7z" stroke="#303030" stroke-width="0.9" fill="none"/><path d="M8.500 1v15M11.500 1v15" stroke="#707070" stroke-width="1" fill="none" shape-rendering="crispEdges"/><path d="M15.500 0v16" stroke="#a0a0a0" stroke-width="1" fill="none" shape-rendering="crispEdges"/></g><g transform="translate(264,107)"><path d="M8 9.5c-2 0-2-3 .5-3 3 0 3.500 5-.5 5-4.500 0-5.500-7-.5-8.500 4-1 6.500 1.500 7 3" stroke="#000" stroke-width="1.2" fill="none"/><path d="M1 8.5h15M8.5 0.5v15" stroke="#ff0000" stroke-width="1.1" fill="none" shape-rendering="crispEdges"/></g><g transform="translate(287,107)"><circle cx="8.500" cy="8" r="6.700" fill="none" stroke="#a0a0a0" stroke-width=".800"/><circle cx="8.500" cy="8" r="4.200" fill="none" stroke="#a0a0a0" stroke-width=".800"/><circle cx="8.500" cy="8" r="2.200" fill="none" stroke="#a0a0a0" stroke-width=".700"/><path d="M5 4.500l7 7M12 4.500l-7 7" stroke="#008080" stroke-width="1" fill="none"/><path d="M1 8h15M8.500 0.500v15" stroke="#ff0000" stroke-width="0.8" fill="none"/><circle cx="8.500" cy="8" r="1.300" fill="#ff0000"/><path d="M3.500 3l.1.1M13.500 3l.1.1M3.500 13l.1.1M13.500 13l.1.1" stroke="#008080" stroke-width="1.4" fill="none" stroke-linecap="round"/></g><g transform="translate(310,107)"><path d="M2 1.500h13v13h-13zM4.500 4h8v8h-8zM6.500 6h4v4h-4z" stroke="#a0a0a0" stroke-width="0.9" fill="none" shape-rendering="crispEdges"/><path d="M8.500 0v16M0.500 8h16" stroke="#20a0a0" stroke-width="0.8" fill="none" shape-rendering="crispEdges"/><path d="M2 1.500l13 13M15 1.500l-13 13" stroke="#ff0000" stroke-width="0.9" fill="none" stroke-dasharray="1.200 1.800"/><rect x="8" y="7.5" width="1.5" height="1.5" fill="#ff0000" shape-rendering="crispEdges"/><path d="M2 1.500l.1.1M15 1.500l.1.1M2 14.500l.1.1M15 14.500l.1.1M8.500 1.500l.1.1M8.500 14.500l.1.1M2 8l.1.1M15 8l.1.1" stroke="#ff0000" stroke-width="1.6" fill="none" stroke-linecap="round"/></g><g transform="translate(333,107)"><path d="M1.500 1v14M8.500 1v14" stroke="#000" stroke-width="1.2" fill="none" shape-rendering="crispEdges"/><path d="M1.500 11l7-9" stroke="#000" stroke-width="1.1" fill="none"/><path d="M12.500 1v3M14.500 1v3" stroke="#000" stroke-width="1" fill="none" shape-rendering="crispEdges"/></g><g transform="translate(356,107)"><path d="M0.500 3.500h16M0.500 0v7M15.500 0v7M8.500 0v3.500" stroke="#000" stroke-width="1" fill="none" shape-rendering="crispEdges"/><text x="8.5" y="15.3" font-size="11" fill="#ff0000" font-weight="normal" font-family="'Liberation Sans','Noto Sans CJK SC',sans-serif" text-anchor="middle">神</text></g><g transform="translate(379,107)"><path d="M0.500 3.500h16M0.500 0v7M15.500 0v7M8.500 0v3.500" stroke="#000" stroke-width="1" fill="none" shape-rendering="crispEdges"/><text x="8.5" y="15.3" font-size="11" fill="#ff0000" font-weight="normal" font-family="'Liberation Sans','Noto Sans CJK SC',sans-serif" text-anchor="middle">赢</text></g><g transform="translate(402,107)"><path d="M0.5 1v14M15.500 1v14" stroke="#000" stroke-width="1.2" fill="none" shape-rendering="crispEdges"/><path d="M1 1.5h14M1 4.5h14M1 7.5h14M1 10.5h14" stroke="#000" stroke-width="1" fill="none" shape-rendering="crispEdges" stroke-dasharray="1 1"/><text x="8" y="16" font-size="6" fill="#000" font-weight="bold" font-family="'Liberation Sans',sans-serif" text-anchor="middle" textLength="12" lengthAdjust="spacingAndGlyphs">1 2 3</text></g><g transform="translate(425,107)"><path d="M1.500 2v11M8.500 0v16M15.500 2v11" stroke="#000" stroke-width="1.2" fill="none" shape-rendering="crispEdges"/><path d="M2 6.5h13M2 6.5l2.500-2M2 6.5l2.500 2M15 6.5l-2.500-2M15 6.5l-2.500 2" stroke="#000" stroke-width="1" fill="none"/></g><g transform="translate(458,107)"><path d="M5.500 1.500h9v9h-9z" stroke="#000" stroke-width="1.3" fill="none" shape-rendering="crispEdges"/><path d="M1.500 1.500v9M0 1.500h3.500M0 10.500h3.500M5.500 14.500h9M5.500 12.500v3.500M14.500 12.500v3.500" stroke="#909090" stroke-width="1" fill="none" shape-rendering="crispEdges"/></g><g transform="translate(481,107)"><path d="M0.500 15l15-13" stroke="#000" stroke-width="1" fill="none"/><path d="M0.5 15l6-15M0.500 15l15-7" stroke="#ff0000" stroke-width="1.1" fill="none"/><path d="M0.500 15l3-11M0.500 15l15-2" stroke="#900000" stroke-width="1.1" fill="none"/><rect x="0" y="14" width="2" height="2" fill="#c00000" shape-rendering="crispEdges"/></g><g transform="translate(504,107)"><path d="M1.500 3.500h13v12h-13z" stroke="#000" stroke-width="1.3" fill="none" shape-rendering="crispEdges"/><path d="M1.500 15.500l4-15M1.500 15.500l14.500-4" stroke="#9000a0" stroke-width="1.1" fill="none"/><path d="M1.500 15.500l9-15M1.500 15.500l15-10M1.500 15.500l15-15" stroke="#ff0000" stroke-width="1.1" fill="none"/><path d="M1.500 15.500l13-12" stroke="#000" stroke-width="1" fill="none"/></g><g transform="translate(527,107)"><path d="M1.500 1.500h13v12h-13z" stroke="#000" stroke-width="1.3" fill="none" shape-rendering="crispEdges"/><path d="M1.500 1.500l5 14.500M1.500 1.500l14.500 4" stroke="#9000a0" stroke-width="1.1" fill="none"/><path d="M1.500 1.500l10 14.500M1.500 1.500l15 11M1.500 1.500l15 14.500" stroke="#ff0000" stroke-width="1.1" fill="none"/></g><g transform="translate(550,107)"><path d="M1 15.500l15-14.500M1 15.500l15-8M1 15.500l15-4M1 15.500l3-.500" stroke="#000" stroke-width="1" fill="none"/><path d="M1 15.5l3.500-3.500v3z" stroke="#000" stroke-width="0" fill="#000"/></g><g transform="translate(573,107)"><path d="M1.500 1.500l6 12 5.500-7.500 3 3.500" stroke="#000" stroke-width="1.1" fill="none"/><path d="M1 15.500h15" stroke="#606060" stroke-width="1" fill="none" shape-rendering="crispEdges" stroke-dasharray="1 1"/></g><g transform="translate(596,107)"><path d="M1.500 1v14M5 1v14M8.500 1v14M12 1v14M15.500 1v14M1 1.500h15M1 5h15M1 8.500h15M1 12h15M1 15.500h15" stroke="#a0a0a0" stroke-width="1" fill="none"/><rect x="0.9" y="0.9" width="1.200" height="1.200" fill="#ff0000"/><rect x="0.9" y="4.4" width="1.200" height="1.200" fill="#ff0000"/><rect x="0.9" y="7.9" width="1.200" height="1.200" fill="#ff0000"/><rect x="0.9" y="11.4" width="1.200" height="1.200" fill="#ff0000"/><rect x="0.9" y="14.9" width="1.200" height="1.200" fill="#ff0000"/><rect x="4.4" y="0.9" width="1.200" height="1.200" fill="#ff0000"/><rect x="4.4" y="7.9" width="1.200" height="1.200" fill="#ff0000"/><rect x="4.4" y="14.9" width="1.200" height="1.200" fill="#ff0000"/><rect x="7.9" y="0.9" width="1.200" height="1.200" fill="#ff0000"/><rect x="7.9" y="4.4" width="1.200" height="1.200" fill="#ff0000"/><rect x="7.9" y="7.9" width="1.200" height="1.200" fill="#ff0000"/><rect x="7.9" y="11.4" width="1.200" height="1.200" fill="#ff0000"/><rect x="7.9" y="14.9" width="1.200" height="1.200" fill="#ff0000"/><rect x="11.4" y="0.9" width="1.200" height="1.200" fill="#ff0000"/><rect x="11.4" y="7.9" width="1.200" height="1.200" fill="#ff0000"/><rect x="11.4" y="14.9" width="1.200" height="1.200" fill="#ff0000"/><rect x="14.9" y="0.9" width="1.200" height="1.200" fill="#ff0000"/><rect x="14.9" y="4.4" width="1.200" height="1.200" fill="#ff0000"/><rect x="14.9" y="7.9" width="1.200" height="1.200" fill="#ff0000"/><rect x="14.9" y="11.4" width="1.200" height="1.200" fill="#ff0000"/><rect x="14.9" y="14.9" width="1.200" height="1.200" fill="#ff0000"/><rect x="7.5" y="7.5" width="2" height="2" fill="#ff0000" shape-rendering="crispEdges"/></g><g transform="translate(619,107)"><path d="M1.500 1v14M5 1v14M8.500 1v14M12 1v14M15.500 1v14M1 1.500h15M1 5h15M1 8.500h15M1 12h15M1 15.500h15" stroke="#a0a0a0" stroke-width="1" fill="none"/><rect x="0.9" y="0.9" width="1.200" height="1.200" fill="#ff0000"/><rect x="0.9" y="4.4" width="1.200" height="1.200" fill="#ff0000"/><rect x="0.9" y="7.9" width="1.200" height="1.200" fill="#ff0000"/><rect x="0.9" y="11.4" width="1.200" height="1.200" fill="#ff0000"/><rect x="0.9" y="14.9" width="1.200" height="1.200" fill="#ff0000"/><rect x="4.4" y="0.9" width="1.200" height="1.200" fill="#ff0000"/><rect x="4.4" y="7.9" width="1.200" height="1.200" fill="#ff0000"/><rect x="4.4" y="14.9" width="1.200" height="1.200" fill="#ff0000"/><rect x="7.9" y="0.9" width="1.200" height="1.200" fill="#ff0000"/><rect x="7.9" y="4.4" width="1.200" height="1.200" fill="#ff0000"/><rect x="7.9" y="7.9" width="1.200" height="1.200" fill="#ff0000"/><rect x="7.9" y="11.4" width="1.200" height="1.200" fill="#ff0000"/><rect x="7.9" y="14.9" width="1.200" height="1.200" fill="#ff0000"/><rect x="11.4" y="0.9" width="1.200" height="1.200" fill="#ff0000"/><rect x="11.4" y="7.9" width="1.200" height="1.200" fill="#ff0000"/><rect x="11.4" y="14.9" width="1.200" height="1.200" fill="#ff0000"/><rect x="14.9" y="0.9" width="1.200" height="1.200" fill="#ff0000"/><rect x="14.9" y="4.4" width="1.200" height="1.200" fill="#ff0000"/><rect x="14.9" y="7.9" width="1.200" height="1.200" fill="#ff0000"/><rect x="14.9" y="11.4" width="1.200" height="1.200" fill="#ff0000"/><rect x="14.9" y="14.9" width="1.200" height="1.200" fill="#ff0000"/><rect x="7.5" y="7.5" width="2" height="2" fill="#ff0000" shape-rendering="crispEdges"/><path d="M1.500 0v15.500h15M1.500 0l-1.500 2.500M1.500 0l1.500 2.500M16.500 15.500l-2.500-1.500M16.500 15.500l-2.500 1.500" stroke="#000" stroke-width="1.1" fill="none"/></g><g transform="translate(642,107)"><path d="M1 8l15-7M1 11.500l15-7M1 15l15-7" stroke="#303030" stroke-width="1.1" fill="none"/><path d="M12.500 2v13M1.500 7v8.500" stroke="#505050" stroke-width="1" fill="none" shape-rendering="crispEdges"/></g><g transform="translate(675,107)"><path d="M2 1v14" stroke="#000" stroke-width="1.6" fill="none" shape-rendering="crispEdges"/><path d="M2 1.500h9M2 4.500h7M2 7.500h9M2 10.500h7M2 13.500h9M11 15.500h4M14.500 2v13" stroke="#000" stroke-width="1" fill="none" shape-rendering="crispEdges"/><path d="M12 1.500h3M11 4.500h2M12 7.500h3M11 10.500h2" stroke="#000" stroke-width="1" fill="none" shape-rendering="crispEdges" stroke-dasharray="1 1"/></g><g transform="translate(698,107)"><path d="M1 0.500h15M1 15.500h6" stroke="#ff0000" stroke-width="1.2" fill="none" shape-rendering="crispEdges"/><path d="M3 15l5.500-14 2.500 4 4.500-4" stroke="#000" stroke-width="1" fill="none"/><text x="7.5" y="15.6" font-size="10" fill="#ff0000" font-weight="normal" font-family="'DejaVu Sans',sans-serif" textLength="8.500" lengthAdjust="spacingAndGlyphs">%</text></g><g transform="translate(721,107)"><text x="8.6" y="13.5" font-size="16" fill="#000" font-weight="normal" font-family="'Liberation Sans',sans-serif" text-anchor="middle" textLength="12" lengthAdjust="spacingAndGlyphs">%</text></g><g transform="translate(744,107)"><path d="M1 0.500h15M1 15.500h15M9 4.500h7M9 8.500h7" stroke="#000" stroke-width="1.2" fill="none" shape-rendering="crispEdges"/><text x="0.5" y="13.6" font-size="10" fill="#ff0000" font-weight="normal" font-family="'DejaVu Sans',sans-serif" textLength="8.500" lengthAdjust="spacingAndGlyphs">%</text></g><g transform="translate(767,107)"><circle cx="8.500" cy="8" r="7.700" fill="#fafafa" stroke="#b0b0b0" stroke-width="1.200"/><text x="8.5" y="12" font-size="10" fill="#808000" font-weight="500" font-family="'Liberation Sans','Noto Sans CJK SC',sans-serif" text-anchor="middle">金</text></g><g transform="translate(790,107)"><path d="M1 0.500h15M1 15.500h15M9 4.500h7M9 8.500h7" stroke="#000" stroke-width="1.2" fill="none" shape-rendering="crispEdges"/><text x="5.5" y="13.5" font-size="10" fill="#808000" font-weight="500" font-family="'Liberation Sans','Noto Sans CJK SC',sans-serif" text-anchor="middle">金</text></g><g transform="translate(813,107)"><path d="M3.500 0v16M1.500 3.500h4M1.500 7.500h4M1.500 11.500h4M1 15.500h5" stroke="#000" stroke-width="1.2" fill="none" shape-rendering="crispEdges"/><g transform="translate(4.5,1)"><g transform="scale(0.8)"><path d="M8.800 3.100L12 3.500 15.300 6 14.600 10 8 13 6 12z" stroke="#909090" stroke-width="0" fill="#9a9a9a"/><path d="M10.500 5l2 1-3.500 6z" stroke="#d8d8d8" stroke-width="0" fill="#d8d8d8"/><path d="M10.200 0.200L15.300 2.500V6L12 3.500 8.800 3.100z" stroke="#ff0000" stroke-width="0" fill="#ff0000"/><path d="M6 12l2 1-4.300 2.400z" stroke="#ff0000" stroke-width="0" fill="#ff0000"/><path d="M10.200 0.200L15.300 2.500 14.600 10 8 13 3.700 15.400 6 12 8.800 3.100z" stroke="#000" stroke-width="0.9" fill="none"/></g></g></g><g transform="translate(836,107)"><path d="M1 0.500h15M1 15.500h15" stroke="#ff0000" stroke-width="1.2" fill="none" shape-rendering="crispEdges"/><path d="M1 8.500h15" stroke="#000" stroke-width="1" fill="none" shape-rendering="crispEdges"/><path d="M1 10c2-9 4-9 6-1s4 9 6 0 1-4 2-5" stroke="#909090" stroke-width="1.1" fill="none"/></g><g transform="translate(859,107)"><path d="M1 0.500h15M1 15.500h15" stroke="#ff0000" stroke-width="1.2" fill="none" shape-rendering="crispEdges"/><text x="8.5" y="13" font-size="10.5" fill="#808000" font-weight="500" font-family="'Liberation Sans','Noto Sans CJK SC',sans-serif" text-anchor="middle">金</text></g><g transform="translate(882,107)"><path d="M1 15.500l15-15" stroke="#000" stroke-width="1.1" fill="none"/><path d="M7.500 8.500h8.500M4.500 12.500h11.500M1 15.500h15" stroke="#000" stroke-width="1" fill="none" shape-rendering="crispEdges"/><text x="0.8" y="9.8" font-size="11" fill="#ff0000" font-weight="normal" font-family="'Liberation Sans',sans-serif">J</text></g><g transform="translate(905,107)"><path d="M1 15.500l15-15" stroke="#000" stroke-width="1.1" fill="none"/><path d="M7.500 8.500h8.500M4.500 12.500h11.500M1 15.500h15" stroke="#000" stroke-width="1" fill="none" shape-rendering="crispEdges"/><text x="0.3" y="9.8" font-size="11.5" fill="#ff0000" font-weight="bold" font-family="'Liberation Sans',sans-serif">F</text></g><g transform="translate(928,107)"><path d="M1 15.500l15-15" stroke="#000" stroke-width="1.1" fill="none"/><path d="M7.500 8.500h8.500M4.500 12.500h11.500M1 15.500h15" stroke="#000" stroke-width="1" fill="none" shape-rendering="crispEdges"/><text x="0.3" y="9.8" font-size="10.5" fill="#808000" font-weight="500" font-family="'Liberation Sans','Noto Sans CJK SC',sans-serif">金</text></g><g transform="translate(951,107)"><path d="M1 15.500l15-15" stroke="#000" stroke-width="1.1" fill="none"/><path d="M7.500 8.500h8.500M4.500 12.500h11.500M1 15.500h15" stroke="#000" stroke-width="1" fill="none" shape-rendering="crispEdges"/><text x="0.3" y="9.8" font-size="11.5" fill="#ff0000" font-weight="normal" font-family="'Liberation Sans','Noto Sans CJK SC',sans-serif">神</text></g><g transform="translate(974,107)"><path d="M1 15.500l15-15" stroke="#000" stroke-width="1.1" fill="none"/><path d="M7.500 8.500h8.500M4.500 12.500h11.500M1 15.500h15" stroke="#000" stroke-width="1" fill="none" shape-rendering="crispEdges"/><text x="0.3" y="9.8" font-size="11.5" fill="#ff0000" font-weight="normal" font-family="'Liberation Sans','Noto Sans CJK SC',sans-serif">赢</text></g><g transform="translate(997,107)"><path d="M1 15.500l15-15" stroke="#000" stroke-width="1.1" fill="none"/><path d="M7.500 8.500h8.500M4.500 12.500h11.500M1 15.500h15" stroke="#000" stroke-width="1" fill="none" shape-rendering="crispEdges"/><text x="0.3" y="9.8" font-size="11" fill="#ff0000" font-weight="normal" font-family="'Liberation Sans','Noto Sans CJK SC',sans-serif">四</text></g>
</svg>
<svg width="1241" height="681" viewBox="0 0 1241 681" style="top:0" font-family="'Liberation Sans',sans-serif">
<g shape-rendering="crispEdges">
<rect x="0" y="129" width="1241" height="552" fill="#a0a0a0"/>
<rect x="1" y="130" width="1240" height="551" fill="#696969"/>
<rect x="2" y="131" width="1239" height="550" fill="#fff"/>
<rect x="1238" y="131" width="2" height="550" fill="#8a8a8a"/>
<rect x="2" y="589" width="1239" height="2" fill="#a0a0a0"/>
<rect x="72" y="143" width="1166" height="1" fill="#a0a0a0"/>
<rect x="72" y="606" width="1166" height="1" fill="#a0a0a0"/>
<line x1="72" y1="523.5" x2="1238" y2="523.5" stroke="#a0a0a0" stroke-width="1" stroke-dasharray="3 3"/>
<line x1="72" y1="541.5" x2="1238" y2="541.5" stroke="#a0a0a0" stroke-width="1" stroke-dasharray="3 3"/>
<line x1="72" y1="557.5" x2="1238" y2="557.5" stroke="#a0a0a0" stroke-width="1" stroke-dasharray="3 3"/>
<line x1="72" y1="573.5" x2="1238" y2="573.5" stroke="#a0a0a0" stroke-width="1" stroke-dasharray="3 3"/>
<line x1="70" y1="610.5" x2="1238" y2="610.5" stroke="#a0a0a0" stroke-width="1" stroke-dasharray="3 3"/>
<line x1="70" y1="628.5" x2="1238" y2="628.5" stroke="#a0a0a0" stroke-width="1" stroke-dasharray="3 3"/>
<line x1="70" y1="646.5" x2="1238" y2="646.5" stroke="#a0a0a0" stroke-width="1" stroke-dasharray="3 3"/>
<line x1="70" y1="654.5" x2="1238" y2="654.5" stroke="#a0a0a0" stroke-width="1" stroke-dasharray="3 3"/>
<line x1="70" y1="664.5" x2="1238" y2="664.5" stroke="#a0a0a0" stroke-width="1" stroke-dasharray="3 3"/>
<rect x="72" y="159" width="1086" height="1" fill="#800080"/>
<rect x="72" y="183" width="1086" height="1" fill="#a6caf0"/>
<rect x="72" y="208" width="1079" height="1" fill="#0000ff"/>
<rect x="72" y="271" width="1100" height="1" fill="#ff0000"/>
<rect x="72" y="301" width="1086" height="1" fill="#a6caf0"/>
<rect x="72" y="304" width="1100" height="1" fill="#ff0000"/>
<rect x="72" y="389" width="1100" height="1" fill="#ff0000"/>
<rect x="72" y="400" width="1086" height="1" fill="#808080"/>
<rect x="72" y="419" width="1093" height="1" fill="#a6caf0"/>
<rect x="72" y="449" width="1093" height="1" fill="#800080"/>
<rect x="72" y="497" width="1086" height="1" fill="#0000ff"/>
<rect x="72" y="507" width="1114" height="1" fill="#ff0000"/>
</g>
<text x="1159" y="163.7" font-family="'DejaVu Sans',sans-serif" font-size="11" fill="#800080" stroke="#800080" stroke-width="0.3" textLength="73.29999999999995" lengthAdjust="spacingAndGlyphs">150.0%(180)</text>
<text x="1159" y="187.7" font-family="'DejaVu Sans',sans-serif" font-size="11" fill="#a6caf0" stroke="#a6caf0" stroke-width="0.3" textLength="73.29999999999995" lengthAdjust="spacingAndGlyphs">275.0%(270)</text>
<text x="1152" y="212.7" font-family="'DejaVu Sans',sans-serif" font-size="11" fill="#0000ff" stroke="#0000ff" stroke-width="0.3" textLength="80.29999999999995" lengthAdjust="spacingAndGlyphs">133.33%(120)</text>
<text x="1173" y="275.7" font-family="'DejaVu Sans',sans-serif" font-size="11" fill="#ff0000" stroke="#ff0000" stroke-width="0.3" textLength="59.299999999999955" lengthAdjust="spacingAndGlyphs">200.0%(0)</text>
<text x="1159" y="305.7" font-family="'DejaVu Sans',sans-serif" font-size="11" fill="#a6caf0" stroke="#a6caf0" stroke-width="0.3" textLength="73.29999999999995" lengthAdjust="spacingAndGlyphs">175.0%(270)</text>
<text x="1173" y="308.7" font-family="'DejaVu Sans',sans-serif" font-size="11" fill="#ff0000" stroke="#ff0000" stroke-width="0.3" textLength="59.299999999999955" lengthAdjust="spacingAndGlyphs">100.0%(0)</text>
<text x="1173" y="393.7" font-family="'DejaVu Sans',sans-serif" font-size="11" fill="#ff0000" stroke="#ff0000" stroke-width="0.3" textLength="59.299999999999955" lengthAdjust="spacingAndGlyphs">100.0%(0)</text>
<text x="1159" y="404.7" font-family="'DejaVu Sans',sans-serif" font-size="11" fill="#808080" stroke="#808080" stroke-width="0.3" textLength="73.29999999999995" lengthAdjust="spacingAndGlyphs">66.67%(240)</text>
<text x="1166" y="423.7" font-family="'DejaVu Sans',sans-serif" font-size="11" fill="#a6caf0" stroke="#a6caf0" stroke-width="0.3" textLength="66.29999999999995" lengthAdjust="spacingAndGlyphs">75.0%(270)</text>
<text x="1166" y="453.7" font-family="'DejaVu Sans',sans-serif" font-size="11" fill="#800080" stroke="#800080" stroke-width="0.3" textLength="66.29999999999995" lengthAdjust="spacingAndGlyphs">50.0%(180)</text>
<text x="1159" y="501.7" font-family="'DejaVu Sans',sans-serif" font-size="11" fill="#0000ff" stroke="#0000ff" stroke-width="0.3" textLength="73.29999999999995" lengthAdjust="spacingAndGlyphs">33.33%(120)</text>
<g shape-rendering="crispEdges">
<rect x="1136" y="144" width="102" height="15" fill="#fff"/>
<rect x="75" y="421" width="1" height="1" fill="#ff0000"/>
<rect x="75" y="427" width="1" height="7" fill="#ff0000"/>
<rect x="72.5" y="422.5" width="5" height="4" fill="none" stroke="#ff0000" stroke-width="1"/>
<rect x="82" y="420" width="1" height="25" fill="#008000"/>
<rect x="79" y="431" width="6" height="13" fill="#008000"/>
<rect x="89" y="439" width="1" height="1" fill="#ff0000"/>
<rect x="89" y="446" width="1" height="11" fill="#ff0000"/>
<rect x="86.5" y="440.5" width="5" height="5" fill="none" stroke="#ff0000" stroke-width="1"/>
<rect x="96" y="438" width="1" height="11" fill="#008000"/>
<rect x="93" y="443" width="6" height="1" fill="#008000"/>
<rect x="103" y="439" width="1" height="12" fill="#008000"/>
<rect x="100" y="446" width="6" height="4" fill="#008000"/>
<rect x="110" y="446" width="1" height="19" fill="#008000"/>
<rect x="107" y="448" width="6" height="17" fill="#008000"/>
<rect x="117" y="466" width="1" height="23" fill="#008000"/>
<rect x="114" y="467" width="6" height="20" fill="#008000"/>
<rect x="124" y="475" width="1" height="1" fill="#ff0000"/>
<rect x="124" y="488" width="1" height="3" fill="#ff0000"/>
<rect x="121.5" y="476.5" width="5" height="11" fill="none" stroke="#ff0000" stroke-width="1"/>
<rect x="131" y="469" width="1" height="2" fill="#ff0000"/>
<rect x="131" y="476" width="1" height="2" fill="#ff0000"/>
<rect x="128.5" y="471.5" width="5" height="4" fill="none" stroke="#ff0000" stroke-width="1"/>
<rect x="138" y="470" width="1" height="1" fill="#ff0000"/>
<rect x="138" y="474" width="1" height="11" fill="#ff0000"/>
<rect x="135.5" y="471.5" width="5" height="2" fill="none" stroke="#ff0000" stroke-width="1"/>
<rect x="145" y="463" width="1" height="7" fill="#ff0000"/>
<rect x="145" y="473" width="1" height="2" fill="#ff0000"/>
<rect x="142.5" y="470.5" width="5" height="2" fill="none" stroke="#ff0000" stroke-width="1"/>
<rect x="152" y="474" width="1" height="10" fill="#008000"/>
<rect x="149" y="474" width="6" height="9" fill="#008000"/>
<rect x="159" y="464" width="1" height="15" fill="#ff0000"/>
<rect x="159" y="485" width="1" height="1" fill="#ff0000"/>
<rect x="156.5" y="479.5" width="5" height="5" fill="none" stroke="#ff0000" stroke-width="1"/>
<rect x="166" y="477" width="1" height="12" fill="#008000"/>
<rect x="163" y="478" width="6" height="4" fill="#008000"/>
<rect x="173" y="451" width="1" height="2" fill="#ff0000"/>
<rect x="173" y="474" width="1" height="4" fill="#ff0000"/>
<rect x="170.5" y="453.5" width="5" height="20" fill="none" stroke="#ff0000" stroke-width="1"/>
<rect x="180" y="449" width="1" height="11" fill="#008000"/>
<rect x="177" y="452" width="6" height="3" fill="#008000"/>
<rect x="187" y="452" width="1" height="8" fill="#008000"/>
<rect x="184" y="456" width="6" height="1" fill="#008000"/>
<rect x="194" y="458" width="1" height="16" fill="#008000"/>
<rect x="191" y="459" width="6" height="13" fill="#008000"/>
<rect x="201" y="471" width="1" height="10" fill="#ff0000"/>
<rect x="198" y="471" width="6" height="2" fill="#ff0000"/>
<rect x="208" y="474" width="1" height="18" fill="#008000"/>
<rect x="205" y="474" width="6" height="12" fill="#008000"/>
<rect x="215" y="478" width="1" height="10" fill="#008000"/>
<rect x="212" y="481" width="6" height="3" fill="#008000"/>
<rect x="222" y="489" width="1" height="8" fill="#ff0000"/>
<rect x="219.5" y="472.5" width="5" height="16" fill="none" stroke="#ff0000" stroke-width="1"/>
<rect x="229" y="462" width="1" height="15" fill="#008000"/>
<rect x="226" y="474" width="6" height="1" fill="#008000"/>
<rect x="236" y="476" width="1" height="1" fill="#ff0000"/>
<rect x="233.5" y="466.5" width="5" height="9" fill="none" stroke="#ff0000" stroke-width="1"/>
<rect x="243" y="459" width="1" height="6" fill="#008000"/>
<rect x="240" y="461" width="6" height="1" fill="#008000"/>
<rect x="250" y="460" width="1" height="7" fill="#008000"/>
<rect x="247" y="462" width="6" height="4" fill="#008000"/>
<rect x="257" y="453" width="1" height="2" fill="#ff0000"/>
<rect x="257" y="466" width="1" height="3" fill="#ff0000"/>
<rect x="254.5" y="455.5" width="5" height="10" fill="none" stroke="#ff0000" stroke-width="1"/>
<rect x="264" y="451" width="1" height="12" fill="#008000"/>
<rect x="261" y="454" width="6" height="8" fill="#008000"/>
<rect x="271" y="458" width="1" height="10" fill="#008000"/>
<rect x="268" y="462" width="6" height="1" fill="#008000"/>
<rect x="278" y="457" width="1" height="7" fill="#008000"/>
<rect x="275" y="463" width="6" height="1" fill="#008000"/>
<rect x="285" y="463" width="1" height="18" fill="#008000"/>
<rect x="282" y="463" width="6" height="10" fill="#008000"/>
<rect x="292" y="461" width="1" height="1" fill="#ff0000"/>
<rect x="292" y="476" width="1" height="2" fill="#ff0000"/>
<rect x="289.5" y="462.5" width="5" height="13" fill="none" stroke="#ff0000" stroke-width="1"/>
<rect x="299" y="462" width="1" height="12" fill="#008000"/>
<rect x="296" y="462" width="6" height="7" fill="#008000"/>
<rect x="306" y="459" width="1" height="10" fill="#ff0000"/>
<rect x="306" y="472" width="1" height="2" fill="#ff0000"/>
<rect x="303.5" y="469.5" width="5" height="2" fill="none" stroke="#ff0000" stroke-width="1"/>
<rect x="313" y="453" width="1" height="1" fill="#ff0000"/>
<rect x="313" y="466" width="1" height="5" fill="#ff0000"/>
<rect x="310.5" y="454.5" width="5" height="11" fill="none" stroke="#ff0000" stroke-width="1"/>
<rect x="320" y="451" width="1" height="1" fill="#ff0000"/>
<rect x="320" y="456" width="1" height="2" fill="#ff0000"/>
<rect x="317.5" y="452.5" width="5" height="3" fill="none" stroke="#ff0000" stroke-width="1"/>
<rect x="327" y="450" width="1" height="8" fill="#ff0000"/>
<rect x="324" y="454" width="6" height="1" fill="#ff0000"/>
<rect x="334" y="439" width="1" height="2" fill="#ff0000"/>
<rect x="331.5" y="441.5" width="5" height="14" fill="none" stroke="#ff0000" stroke-width="1"/>
<rect x="341" y="430" width="1" height="1" fill="#ff0000"/>
<rect x="341" y="441" width="1" height="1" fill="#ff0000"/>
<rect x="338.5" y="431.5" width="5" height="9" fill="none" stroke="#ff0000" stroke-width="1"/>
<rect x="348" y="434" width="1" height="11" fill="#008000"/>
<rect x="345" y="434" width="6" height="10" fill="#008000"/>
<rect x="355" y="445" width="1" height="9" fill="#008000"/>
<rect x="352" y="445" width="6" height="6" fill="#008000"/>
<rect x="362" y="450" width="1" height="24" fill="#008000"/>
<rect x="359" y="452" width="6" height="21" fill="#008000"/>
<rect x="369" y="480" width="1" height="2" fill="#ff0000"/>
<rect x="366.5" y="471.5" width="5" height="8" fill="none" stroke="#ff0000" stroke-width="1"/>
<rect x="376" y="468" width="1" height="6" fill="#008000"/>
<rect x="373" y="472" width="6" height="1" fill="#008000"/>
<rect x="383" y="473" width="1" height="2" fill="#ff0000"/>
<rect x="380.5" y="466.5" width="5" height="6" fill="none" stroke="#ff0000" stroke-width="1"/>
<rect x="390" y="469" width="1" height="8" fill="#008000"/>
<rect x="387" y="469" width="6" height="2" fill="#008000"/>
<rect x="397" y="462" width="1" height="1" fill="#ff0000"/>
<rect x="394.5" y="463.5" width="5" height="8" fill="none" stroke="#ff0000" stroke-width="1"/>
<rect x="404" y="459" width="1" height="6" fill="#ff0000"/>
<rect x="404" y="468" width="1" height="4" fill="#ff0000"/>
<rect x="401.5" y="465.5" width="5" height="2" fill="none" stroke="#ff0000" stroke-width="1"/>
<rect x="411" y="454" width="1" height="2" fill="#ff0000"/>
<rect x="408.5" y="456.5" width="5" height="6" fill="none" stroke="#ff0000" stroke-width="1"/>
<rect x="418" y="454" width="1" height="7" fill="#008000"/>
<rect x="415" y="454" width="6" height="1" fill="#008000"/>
<rect x="425" y="448" width="1" height="1" fill="#ff0000"/>
<rect x="425" y="456" width="1" height="3" fill="#ff0000"/>
<rect x="422.5" y="449.5" width="5" height="6" fill="none" stroke="#ff0000" stroke-width="1"/>
<rect x="432" y="444" width="1" height="2" fill="#ff0000"/>
<rect x="432" y="454" width="1" height="3" fill="#ff0000"/>
<rect x="429.5" y="446.5" width="5" height="7" fill="none" stroke="#ff0000" stroke-width="1"/>
<rect x="439" y="446" width="1" height="6" fill="#008000"/>
<rect x="436" y="447" width="6" height="2" fill="#008000"/>
<rect x="446" y="446" width="1" height="9" fill="#ff0000"/>
<rect x="443" y="448" width="6" height="1" fill="#ff0000"/>
<rect x="453" y="445" width="1" height="1" fill="#ff0000"/>
<rect x="453" y="450" width="1" height="7" fill="#ff0000"/>
<rect x="450.5" y="446.5" width="5" height="3" fill="none" stroke="#ff0000" stroke-width="1"/>
<rect x="460" y="447" width="1" height="17" fill="#008000"/>
<rect x="457" y="447" width="6" height="16" fill="#008000"/>
<rect x="467" y="458" width="1" height="8" fill="#ff0000"/>
<rect x="464" y="463" width="6" height="1" fill="#ff0000"/>
<rect x="474" y="454" width="1" height="3" fill="#ff0000"/>
<rect x="474" y="466" width="1" height="1" fill="#ff0000"/>
<rect x="471.5" y="457.5" width="5" height="8" fill="none" stroke="#ff0000" stroke-width="1"/>
<rect x="481" y="443" width="1" height="1" fill="#ff0000"/>
<rect x="481" y="456" width="1" height="3" fill="#ff0000"/>
<rect x="478.5" y="444.5" width="5" height="11" fill="none" stroke="#ff0000" stroke-width="1"/>
<rect x="488" y="444" width="1" height="5" fill="#ff0000"/>
<rect x="485.5" y="441.5" width="5" height="2" fill="none" stroke="#ff0000" stroke-width="1"/>
<rect x="495" y="439" width="1" height="8" fill="#008000"/>
<rect x="492" y="443" width="6" height="1" fill="#008000"/>
<rect x="502" y="446" width="1" height="12" fill="#008000"/>
<rect x="499" y="446" width="6" height="5" fill="#008000"/>
<rect x="509" y="443" width="1" height="6" fill="#ff0000"/>
<rect x="509" y="456" width="1" height="2" fill="#ff0000"/>
<rect x="506.5" y="449.5" width="5" height="6" fill="none" stroke="#ff0000" stroke-width="1"/>
<rect x="516" y="448" width="1" height="7" fill="#008000"/>
<rect x="513" y="449" width="6" height="2" fill="#008000"/>
<rect x="523" y="436" width="1" height="2" fill="#ff0000"/>
<rect x="520.5" y="438.5" width="5" height="16" fill="none" stroke="#ff0000" stroke-width="1"/>
<rect x="530" y="429" width="1" height="7" fill="#ff0000"/>
<rect x="530" y="438" width="1" height="2" fill="#ff0000"/>
<rect x="527.5" y="436.5" width="5" height="1" fill="none" stroke="#ff0000" stroke-width="1"/>
<rect x="537" y="416" width="1" height="1" fill="#ff0000"/>
<rect x="534.5" y="417.5" width="5" height="16" fill="none" stroke="#ff0000" stroke-width="1"/>
<rect x="544" y="402" width="1" height="1" fill="#ff0000"/>
<rect x="544" y="414" width="1" height="1" fill="#ff0000"/>
<rect x="541.5" y="403.5" width="5" height="10" fill="none" stroke="#ff0000" stroke-width="1"/>
<rect x="551" y="366" width="1" height="1" fill="#ff0000"/>
<rect x="548.5" y="367.5" width="5" height="29" fill="none" stroke="#ff0000" stroke-width="1"/>
<rect x="558" y="357" width="1" height="14" fill="#ff0000"/>
<rect x="555" y="364" width="6" height="1" fill="#ff0000"/>
<rect x="565" y="356" width="1" height="12" fill="#ff0000"/>
<rect x="562" y="365" width="6" height="1" fill="#ff0000"/>
<rect x="572" y="366" width="1" height="4" fill="#ff0000"/>
<rect x="569.5" y="351.5" width="5" height="14" fill="none" stroke="#ff0000" stroke-width="1"/>
<rect x="579" y="340" width="1" height="23" fill="#008000"/>
<rect x="576" y="356" width="6" height="6" fill="#008000"/>
<rect x="586" y="359" width="1" height="2" fill="#ff0000"/>
<rect x="583.5" y="336.5" width="5" height="22" fill="none" stroke="#ff0000" stroke-width="1"/>
<rect x="593" y="335" width="1" height="13" fill="#008000"/>
<rect x="590" y="335" width="6" height="3" fill="#008000"/>
<rect x="600" y="336" width="1" height="4" fill="#ff0000"/>
<rect x="600" y="344" width="1" height="13" fill="#ff0000"/>
<rect x="597.5" y="340.5" width="5" height="3" fill="none" stroke="#ff0000" stroke-width="1"/>
<rect x="607" y="339" width="1" height="23" fill="#008000"/>
<rect x="604" y="341" width="6" height="20" fill="#008000"/>
<rect x="614" y="353" width="1" height="3" fill="#ff0000"/>
<rect x="614" y="359" width="1" height="7" fill="#ff0000"/>
<rect x="611.5" y="356.5" width="5" height="2" fill="none" stroke="#ff0000" stroke-width="1"/>
<rect x="621" y="352" width="1" height="2" fill="#ff0000"/>
<rect x="618.5" y="335.5" width="5" height="16" fill="none" stroke="#ff0000" stroke-width="1"/>
<rect x="628" y="337" width="1" height="8" fill="#008000"/>
<rect x="625" y="337" width="6" height="1" fill="#008000"/>
<rect x="635" y="332" width="1" height="19" fill="#008000"/>
<rect x="632" y="337" width="6" height="1" fill="#008000"/>
<rect x="642" y="332" width="1" height="17" fill="#008000"/>
<rect x="639" y="338" width="6" height="10" fill="#008000"/>
<rect x="649" y="331" width="1" height="3" fill="#ff0000"/>
<rect x="649" y="347" width="1" height="3" fill="#ff0000"/>
<rect x="646.5" y="334.5" width="5" height="12" fill="none" stroke="#ff0000" stroke-width="1"/>
<rect x="656" y="324" width="1" height="1" fill="#ff0000"/>
<rect x="656" y="332" width="1" height="1" fill="#ff0000"/>
<rect x="653.5" y="325.5" width="5" height="6" fill="none" stroke="#ff0000" stroke-width="1"/>
<rect x="663" y="321" width="1" height="12" fill="#ff0000"/>
<rect x="660" y="321" width="6" height="1" fill="#ff0000"/>
<rect x="670" y="320" width="1" height="9" fill="#008000"/>
<rect x="667" y="324" width="6" height="1" fill="#008000"/>
<rect x="677" y="325" width="1" height="19" fill="#008000"/>
<rect x="674" y="325" width="6" height="6" fill="#008000"/>
<rect x="684" y="323" width="1" height="1" fill="#ff0000"/>
<rect x="684" y="332" width="1" height="3" fill="#ff0000"/>
<rect x="681.5" y="324.5" width="5" height="7" fill="none" stroke="#ff0000" stroke-width="1"/>
<rect x="691" y="324" width="1" height="13" fill="#008000"/>
<rect x="688" y="324" width="6" height="8" fill="#008000"/>
<rect x="698" y="331" width="1" height="21" fill="#008000"/>
<rect x="695" y="335" width="6" height="12" fill="#008000"/>
<rect x="705" y="341" width="1" height="8" fill="#ff0000"/>
<rect x="702" y="346" width="6" height="2" fill="#ff0000"/>
<rect x="712" y="340" width="1" height="16" fill="#008000"/>
<rect x="709" y="345" width="6" height="10" fill="#008000"/>
<rect x="719" y="340" width="1" height="1" fill="#ff0000"/>
<rect x="719" y="353" width="1" height="4" fill="#ff0000"/>
<rect x="716.5" y="341.5" width="5" height="11" fill="none" stroke="#ff0000" stroke-width="1"/>
<rect x="726" y="327" width="1" height="1" fill="#ff0000"/>
<rect x="726" y="338" width="1" height="2" fill="#ff0000"/>
<rect x="723.5" y="328.5" width="5" height="9" fill="none" stroke="#ff0000" stroke-width="1"/>
<rect x="733" y="306" width="1" height="1" fill="#ff0000"/>
<rect x="733" y="325" width="1" height="4" fill="#ff0000"/>
<rect x="730.5" y="307.5" width="5" height="17" fill="none" stroke="#ff0000" stroke-width="1"/>
<rect x="740" y="290" width="1" height="2" fill="#ff0000"/>
<rect x="740" y="304" width="1" height="2" fill="#ff0000"/>
<rect x="737.5" y="292.5" width="5" height="11" fill="none" stroke="#ff0000" stroke-width="1"/>
<rect x="747" y="278" width="1" height="1" fill="#ff0000"/>
<rect x="747" y="290" width="1" height="5" fill="#ff0000"/>
<rect x="744.5" y="279.5" width="5" height="10" fill="none" stroke="#ff0000" stroke-width="1"/>
<rect x="754" y="265" width="1" height="1" fill="#ff0000"/>
<rect x="754" y="275" width="1" height="4" fill="#ff0000"/>
<rect x="751.5" y="266.5" width="5" height="8" fill="none" stroke="#ff0000" stroke-width="1"/>
<rect x="761" y="263" width="1" height="10" fill="#008000"/>
<rect x="758" y="264" width="6" height="2" fill="#008000"/>
<rect x="768" y="270" width="1" height="9" fill="#008000"/>
<rect x="765" y="271" width="6" height="1" fill="#008000"/>
<rect x="775" y="255" width="1" height="26" fill="#008000"/>
<rect x="772" y="273" width="6" height="3" fill="#008000"/>
<rect x="782" y="277" width="1" height="5" fill="#ff0000"/>
<rect x="779.5" y="262.5" width="5" height="14" fill="none" stroke="#ff0000" stroke-width="1"/>
<rect x="789" y="256" width="1" height="1" fill="#ff0000"/>
<rect x="789" y="263" width="1" height="6" fill="#ff0000"/>
<rect x="786.5" y="257.5" width="5" height="5" fill="none" stroke="#ff0000" stroke-width="1"/>
<rect x="796" y="252" width="1" height="36" fill="#008000"/>
<rect x="793" y="256" width="6" height="30" fill="#008000"/>
<rect x="803" y="284" width="1" height="12" fill="#ff0000"/>
<rect x="800.5" y="279.5" width="5" height="4" fill="none" stroke="#ff0000" stroke-width="1"/>
<rect x="810" y="270" width="1" height="3" fill="#ff0000"/>
<rect x="810" y="280" width="1" height="5" fill="#ff0000"/>
<rect x="807.5" y="273.5" width="5" height="6" fill="none" stroke="#ff0000" stroke-width="1"/>
<rect x="817" y="262" width="1" height="2" fill="#ff0000"/>
<rect x="817" y="274" width="1" height="6" fill="#ff0000"/>
<rect x="814.5" y="264.5" width="5" height="9" fill="none" stroke="#ff0000" stroke-width="1"/>
<rect x="824" y="268" width="1" height="26" fill="#008000"/>
<rect x="821" y="268" width="6" height="23" fill="#008000"/>
<rect x="831" y="276" width="1" height="1" fill="#ff0000"/>
<rect x="828.5" y="277.5" width="5" height="13" fill="none" stroke="#ff0000" stroke-width="1"/>
<rect x="838" y="252" width="1" height="2" fill="#ff0000"/>
<rect x="838" y="282" width="1" height="3" fill="#ff0000"/>
<rect x="835.5" y="254.5" width="5" height="27" fill="none" stroke="#ff0000" stroke-width="1"/>
<rect x="845" y="240" width="1" height="19" fill="#008000"/>
<rect x="842" y="248" width="6" height="5" fill="#008000"/>
<rect x="852" y="249" width="1" height="2" fill="#ff0000"/>
<rect x="852" y="257" width="1" height="6" fill="#ff0000"/>
<rect x="849.5" y="251.5" width="5" height="5" fill="none" stroke="#ff0000" stroke-width="1"/>
<rect x="859" y="241" width="1" height="3" fill="#ff0000"/>
<rect x="859" y="247" width="1" height="5" fill="#ff0000"/>
<rect x="856.5" y="244.5" width="5" height="2" fill="none" stroke="#ff0000" stroke-width="1"/>
<rect x="866" y="239" width="1" height="8" fill="#ff0000"/>
<rect x="863" y="240" width="6" height="1" fill="#ff0000"/>
<rect x="873" y="237" width="1" height="10" fill="#ff0000"/>
<rect x="870.5" y="227.5" width="5" height="9" fill="none" stroke="#ff0000" stroke-width="1"/>
<rect x="880" y="221" width="1" height="1" fill="#ff0000"/>
<rect x="880" y="226" width="1" height="12" fill="#ff0000"/>
<rect x="877.5" y="222.5" width="5" height="3" fill="none" stroke="#ff0000" stroke-width="1"/>
<rect x="887" y="226" width="1" height="13" fill="#008000"/>
<rect x="884" y="228" width="6" height="5" fill="#008000"/>
<rect x="894" y="238" width="1" height="18" fill="#008000"/>
<rect x="891" y="238" width="6" height="1" fill="#008000"/>
<rect x="901" y="230" width="1" height="20" fill="#008000"/>
<rect x="898" y="241" width="6" height="2" fill="#008000"/>
<rect x="908" y="232" width="1" height="1" fill="#ff0000"/>
<rect x="908" y="244" width="1" height="9" fill="#ff0000"/>
<rect x="905.5" y="233.5" width="5" height="10" fill="none" stroke="#ff0000" stroke-width="1"/>
<rect x="915" y="223" width="1" height="24" fill="#008000"/>
<rect x="912" y="242" width="6" height="3" fill="#008000"/>
<rect x="922" y="243" width="1" height="32" fill="#008000"/>
<rect x="919" y="248" width="6" height="8" fill="#008000"/>
<rect x="929" y="244" width="1" height="1" fill="#ff0000"/>
<rect x="929" y="252" width="1" height="4" fill="#ff0000"/>
<rect x="926.5" y="245.5" width="5" height="6" fill="none" stroke="#ff0000" stroke-width="1"/>
<rect x="936" y="242" width="1" height="16" fill="#008000"/>
<rect x="933" y="246" width="6" height="11" fill="#008000"/>
<rect x="943" y="249" width="1" height="18" fill="#008000"/>
<rect x="940" y="257" width="6" height="9" fill="#008000"/>
<rect x="950" y="264" width="1" height="22" fill="#008000"/>
<rect x="947" y="268" width="6" height="13" fill="#008000"/>
<rect x="957" y="275" width="1" height="11" fill="#008000"/>
<rect x="954" y="282" width="6" height="1" fill="#008000"/>
<rect x="964" y="288" width="1" height="10" fill="#008000"/>
<rect x="961" y="288" width="6" height="2" fill="#008000"/>
<rect x="968.5" y="258.5" width="5" height="29" fill="none" stroke="#ff0000" stroke-width="1"/>
<rect x="978" y="228" width="1" height="6" fill="#ff0000"/>
<rect x="978" y="254" width="1" height="3" fill="#ff0000"/>
<rect x="975.5" y="234.5" width="5" height="19" fill="none" stroke="#ff0000" stroke-width="1"/>
<rect x="985" y="217" width="1" height="5" fill="#ff0000"/>
<rect x="985" y="233" width="1" height="5" fill="#ff0000"/>
<rect x="982.5" y="222.5" width="5" height="10" fill="none" stroke="#ff0000" stroke-width="1"/>
<rect x="992" y="199" width="1" height="2" fill="#ff0000"/>
<rect x="992" y="219" width="1" height="6" fill="#ff0000"/>
<rect x="989.5" y="201.5" width="5" height="17" fill="none" stroke="#ff0000" stroke-width="1"/>
<rect x="999" y="190" width="1" height="5" fill="#ff0000"/>
<rect x="999" y="197" width="1" height="6" fill="#ff0000"/>
<rect x="996.5" y="195.5" width="5" height="1" fill="none" stroke="#ff0000" stroke-width="1"/>
<rect x="1006" y="191" width="1" height="12" fill="#ff0000"/>
<rect x="1003" y="194" width="6" height="1" fill="#ff0000"/>
<rect x="1013" y="193" width="1" height="12" fill="#008000"/>
<rect x="1010" y="193" width="6" height="9" fill="#008000"/>
<rect x="1020" y="202" width="1" height="12" fill="#ff0000"/>
<rect x="1017.5" y="197.5" width="5" height="4" fill="none" stroke="#ff0000" stroke-width="1"/>
<rect x="1027" y="178" width="1" height="32" fill="#008000"/>
<rect x="1024" y="196" width="6" height="7" fill="#008000"/>
<rect x="72.5" y="571.5" width="5" height="17" fill="none" stroke="#ff0000" stroke-width="1"/>
<rect x="79" y="569" width="6" height="20" fill="#008000"/>
<rect x="86.5" y="569.5" width="5" height="19" fill="none" stroke="#ff0000" stroke-width="1"/>
<rect x="93" y="573" width="6" height="16" fill="#008000"/>
<rect x="100" y="573" width="6" height="16" fill="#008000"/>
<rect x="107" y="570" width="6" height="19" fill="#008000"/>
<rect x="114" y="571" width="6" height="18" fill="#008000"/>
<rect x="121.5" y="574.5" width="5" height="14" fill="none" stroke="#ff0000" stroke-width="1"/>
<rect x="128.5" y="574.5" width="5" height="14" fill="none" stroke="#ff0000" stroke-width="1"/>
<rect x="135.5" y="573.5" width="5" height="15" fill="none" stroke="#ff0000" stroke-width="1"/>
<rect x="142.5" y="574.5" width="5" height="14" fill="none" stroke="#ff0000" stroke-width="1"/>
<rect x="149" y="574" width="6" height="15" fill="#008000"/>
<rect x="156.5" y="573.5" width="5" height="15" fill="none" stroke="#ff0000" stroke-width="1"/>
<rect x="163" y="574" width="6" height="15" fill="#008000"/>
<rect x="170.5" y="566.5" width="5" height="22" fill="none" stroke="#ff0000" stroke-width="1"/>
<rect x="177" y="569" width="6" height="20" fill="#008000"/>
<rect x="184" y="574" width="6" height="15" fill="#008000"/>
<rect x="191" y="574" width="6" height="15" fill="#008000"/>
<rect x="198.5" y="576.5" width="5" height="12" fill="none" stroke="#ff0000" stroke-width="1"/>
<rect x="205" y="576" width="6" height="13" fill="#008000"/>
<rect x="212" y="577" width="6" height="12" fill="#008000"/>
<rect x="219.5" y="576.5" width="5" height="12" fill="none" stroke="#ff0000" stroke-width="1"/>
<rect x="226" y="574" width="6" height="15" fill="#008000"/>
<rect x="233.5" y="576.5" width="5" height="12" fill="none" stroke="#ff0000" stroke-width="1"/>
<rect x="240" y="575" width="6" height="14" fill="#008000"/>
<rect x="247" y="575" width="6" height="14" fill="#008000"/>
<rect x="254.5" y="573.5" width="5" height="15" fill="none" stroke="#ff0000" stroke-width="1"/>
<rect x="261" y="573" width="6" height="16" fill="#008000"/>
<rect x="268" y="574" width="6" height="15" fill="#008000"/>
<rect x="275" y="574" width="6" height="15" fill="#008000"/>
<rect x="282" y="574" width="6" height="15" fill="#008000"/>
<rect x="289.5" y="575.5" width="5" height="13" fill="none" stroke="#ff0000" stroke-width="1"/>
<rect x="296" y="576" width="6" height="13" fill="#008000"/>
<rect x="303.5" y="576.5" width="5" height="12" fill="none" stroke="#ff0000" stroke-width="1"/>
<rect x="310.5" y="573.5" width="5" height="15" fill="none" stroke="#ff0000" stroke-width="1"/>
<rect x="317.5" y="574.5" width="5" height="14" fill="none" stroke="#ff0000" stroke-width="1"/>
<rect x="324.5" y="572.5" width="5" height="16" fill="none" stroke="#ff0000" stroke-width="1"/>
<rect x="331.5" y="569.5" width="5" height="19" fill="none" stroke="#ff0000" stroke-width="1"/>
<rect x="338.5" y="570.5" width="5" height="18" fill="none" stroke="#ff0000" stroke-width="1"/>
<rect x="345" y="571" width="6" height="18" fill="#008000"/>
<rect x="352" y="571" width="6" height="18" fill="#008000"/>
<rect x="359" y="570" width="6" height="19" fill="#008000"/>
<rect x="366.5" y="575.5" width="5" height="13" fill="none" stroke="#ff0000" stroke-width="1"/>
<rect x="373" y="575" width="6" height="14" fill="#008000"/>
<rect x="380.5" y="575.5" width="5" height="13" fill="none" stroke="#ff0000" stroke-width="1"/>
<rect x="387" y="575" width="6" height="14" fill="#008000"/>
<rect x="394.5" y="573.5" width="5" height="15" fill="none" stroke="#ff0000" stroke-width="1"/>
<rect x="401.5" y="569.5" width="5" height="19" fill="none" stroke="#ff0000" stroke-width="1"/>
<rect x="408.5" y="569.5" width="5" height="19" fill="none" stroke="#ff0000" stroke-width="1"/>
<rect x="415" y="569" width="6" height="20" fill="#008000"/>
<rect x="422.5" y="567.5" width="5" height="21" fill="none" stroke="#ff0000" stroke-width="1"/>
<rect x="429.5" y="564.5" width="5" height="24" fill="none" stroke="#ff0000" stroke-width="1"/>
<rect x="436" y="568" width="6" height="21" fill="#008000"/>
<rect x="443.5" y="569.5" width="5" height="19" fill="none" stroke="#ff0000" stroke-width="1"/>
<rect x="450.5" y="570.5" width="5" height="18" fill="none" stroke="#ff0000" stroke-width="1"/>
<rect x="457" y="566" width="6" height="23" fill="#008000"/>
<rect x="464.5" y="569.5" width="5" height="19" fill="none" stroke="#ff0000" stroke-width="1"/>
<rect x="471.5" y="568.5" width="5" height="20" fill="none" stroke="#ff0000" stroke-width="1"/>
<rect x="478.5" y="566.5" width="5" height="22" fill="none" stroke="#ff0000" stroke-width="1"/>
<rect x="485.5" y="564.5" width="5" height="24" fill="none" stroke="#ff0000" stroke-width="1"/>
<rect x="492" y="561" width="6" height="28" fill="#008000"/>
<rect x="499" y="568" width="6" height="21" fill="#008000"/>
<rect x="506.5" y="567.5" width="5" height="21" fill="none" stroke="#ff0000" stroke-width="1"/>
<rect x="513" y="570" width="6" height="19" fill="#008000"/>
<rect x="520.5" y="564.5" width="5" height="24" fill="none" stroke="#ff0000" stroke-width="1"/>
<rect x="527.5" y="561.5" width="5" height="27" fill="none" stroke="#ff0000" stroke-width="1"/>
<rect x="534.5" y="555.5" width="5" height="33" fill="none" stroke="#ff0000" stroke-width="1"/>
<rect x="541.5" y="560.5" width="5" height="28" fill="none" stroke="#ff0000" stroke-width="1"/>
<rect x="548.5" y="541.5" width="5" height="47" fill="none" stroke="#ff0000" stroke-width="1"/>
<rect x="555.5" y="548.5" width="5" height="40" fill="none" stroke="#ff0000" stroke-width="1"/>
<rect x="562.5" y="552.5" width="5" height="36" fill="none" stroke="#ff0000" stroke-width="1"/>
<rect x="569.5" y="556.5" width="5" height="32" fill="none" stroke="#ff0000" stroke-width="1"/>
<rect x="576" y="550" width="6" height="39" fill="#008000"/>
<rect x="583.5" y="554.5" width="5" height="34" fill="none" stroke="#ff0000" stroke-width="1"/>
<rect x="590" y="553" width="6" height="36" fill="#008000"/>
<rect x="597.5" y="553.5" width="5" height="35" fill="none" stroke="#ff0000" stroke-width="1"/>
<rect x="604" y="553" width="6" height="36" fill="#008000"/>
<rect x="611.5" y="562.5" width="5" height="26" fill="none" stroke="#ff0000" stroke-width="1"/>
<rect x="618.5" y="558.5" width="5" height="30" fill="none" stroke="#ff0000" stroke-width="1"/>
<rect x="625" y="558" width="6" height="31" fill="#008000"/>
<rect x="632" y="553" width="6" height="36" fill="#008000"/>
<rect x="639" y="555" width="6" height="34" fill="#008000"/>
<rect x="646.5" y="559.5" width="5" height="29" fill="none" stroke="#ff0000" stroke-width="1"/>
<rect x="653.5" y="556.5" width="5" height="32" fill="none" stroke="#ff0000" stroke-width="1"/>
<rect x="660.5" y="553.5" width="5" height="35" fill="none" stroke="#ff0000" stroke-width="1"/>
<rect x="667" y="555" width="6" height="34" fill="#008000"/>
<rect x="674" y="555" width="6" height="34" fill="#008000"/>
<rect x="681.5" y="557.5" width="5" height="31" fill="none" stroke="#ff0000" stroke-width="1"/>
<rect x="688" y="556" width="6" height="33" fill="#008000"/>
<rect x="695" y="556" width="6" height="33" fill="#008000"/>
<rect x="702.5" y="565.5" width="5" height="23" fill="none" stroke="#ff0000" stroke-width="1"/>
<rect x="709" y="564" width="6" height="25" fill="#008000"/>
<rect x="716.5" y="568.5" width="5" height="20" fill="none" stroke="#ff0000" stroke-width="1"/>
<rect x="723.5" y="563.5" width="5" height="25" fill="none" stroke="#ff0000" stroke-width="1"/>
<rect x="730.5" y="550.5" width="5" height="38" fill="none" stroke="#ff0000" stroke-width="1"/>
<rect x="737.5" y="546.5" width="5" height="42" fill="none" stroke="#ff0000" stroke-width="1"/>
<rect x="744.5" y="549.5" width="5" height="39" fill="none" stroke="#ff0000" stroke-width="1"/>
<rect x="751.5" y="546.5" width="5" height="42" fill="none" stroke="#ff0000" stroke-width="1"/>
<rect x="758" y="549" width="6" height="40" fill="#008000"/>
<rect x="765" y="551" width="6" height="38" fill="#008000"/>
<rect x="772" y="544" width="6" height="45" fill="#008000"/>
<rect x="779.5" y="550.5" width="5" height="38" fill="none" stroke="#ff0000" stroke-width="1"/>
<rect x="786.5" y="545.5" width="5" height="43" fill="none" stroke="#ff0000" stroke-width="1"/>
<rect x="793" y="528" width="6" height="61" fill="#008000"/>
<rect x="800.5" y="546.5" width="5" height="42" fill="none" stroke="#ff0000" stroke-width="1"/>
<rect x="807.5" y="551.5" width="5" height="37" fill="none" stroke="#ff0000" stroke-width="1"/>
<rect x="814.5" y="554.5" width="5" height="34" fill="none" stroke="#ff0000" stroke-width="1"/>
<rect x="821" y="553" width="6" height="36" fill="#008000"/>
<rect x="828.5" y="557.5" width="5" height="31" fill="none" stroke="#ff0000" stroke-width="1"/>
<rect x="835.5" y="544.5" width="5" height="44" fill="none" stroke="#ff0000" stroke-width="1"/>
<rect x="842" y="543" width="6" height="46" fill="#008000"/>
<rect x="849.5" y="554.5" width="5" height="34" fill="none" stroke="#ff0000" stroke-width="1"/>
<rect x="856.5" y="548.5" width="5" height="40" fill="none" stroke="#ff0000" stroke-width="1"/>
<rect x="863.5" y="550.5" width="5" height="38" fill="none" stroke="#ff0000" stroke-width="1"/>
<rect x="870.5" y="548.5" width="5" height="40" fill="none" stroke="#ff0000" stroke-width="1"/>
<rect x="877.5" y="541.5" width="5" height="47" fill="none" stroke="#ff0000" stroke-width="1"/>
<rect x="884" y="543" width="6" height="46" fill="#008000"/>
<rect x="891" y="548" width="6" height="41" fill="#008000"/>
<rect x="898" y="549" width="6" height="40" fill="#008000"/>
<rect x="905.5" y="548.5" width="5" height="40" fill="none" stroke="#ff0000" stroke-width="1"/>
<rect x="912" y="539" width="6" height="50" fill="#008000"/>
<rect x="919" y="546" width="6" height="43" fill="#008000"/>
<rect x="926.5" y="557.5" width="5" height="31" fill="none" stroke="#ff0000" stroke-width="1"/>
<rect x="933" y="555" width="6" height="34" fill="#008000"/>
<rect x="940" y="558" width="6" height="31" fill="#008000"/>
<rect x="947" y="556" width="6" height="33" fill="#008000"/>
<rect x="954" y="562" width="6" height="27" fill="#008000"/>
<rect x="961" y="563" width="6" height="26" fill="#008000"/>
<rect x="968.5" y="553.5" width="5" height="35" fill="none" stroke="#ff0000" stroke-width="1"/>
<rect x="975.5" y="535.5" width="5" height="53" fill="none" stroke="#ff0000" stroke-width="1"/>
<rect x="982.5" y="529.5" width="5" height="59" fill="none" stroke="#ff0000" stroke-width="1"/>
<rect x="989.5" y="523.5" width="5" height="65" fill="none" stroke="#ff0000" stroke-width="1"/>
<rect x="996.5" y="528.5" width="5" height="60" fill="none" stroke="#ff0000" stroke-width="1"/>
<rect x="1003.5" y="526.5" width="5" height="62" fill="none" stroke="#ff0000" stroke-width="1"/>
<rect x="1010" y="536" width="6" height="53" fill="#008000"/>
<rect x="1017.5" y="544.5" width="5" height="44" fill="none" stroke="#ff0000" stroke-width="1"/>
<rect x="1024" y="530" width="6" height="59" fill="#008000"/>
<rect x="75" y="649" width="1" height="6" fill="#ff0000"/>
<rect x="82" y="654" width="1" height="1" fill="#008000"/>
<rect x="89" y="654" width="1" height="5" fill="#008000"/>
<rect x="96" y="654" width="1" height="8" fill="#008000"/>
<rect x="103" y="654" width="1" height="12" fill="#008000"/>
<rect x="110" y="654" width="1" height="16" fill="#008000"/>
<rect x="117" y="654" width="1" height="23" fill="#008000"/>
<rect x="124" y="654" width="1" height="24" fill="#008000"/>
<rect x="131" y="654" width="1" height="22" fill="#008000"/>
<rect x="138" y="654" width="1" height="20" fill="#008000"/>
<rect x="145" y="654" width="1" height="18" fill="#008000"/>
<rect x="152" y="654" width="1" height="17" fill="#008000"/>
<rect x="159" y="654" width="1" height="17" fill="#008000"/>
<rect x="166" y="654" width="1" height="14" fill="#008000"/>
<rect x="173" y="654" width="1" height="6" fill="#008000"/>
<rect x="180" y="654" width="1" height="1" fill="#008000"/>
<rect x="187" y="653" width="1" height="2" fill="#ff0000"/>
<rect x="208" y="654" width="1" height="3" fill="#008000"/>
<rect x="215" y="654" width="1" height="4" fill="#008000"/>
<rect x="222" y="654" width="1" height="1" fill="#008000"/>
<rect x="229" y="654" width="1" height="1" fill="#008000"/>
<rect x="236" y="653" width="1" height="2" fill="#ff0000"/>
<rect x="243" y="650" width="1" height="5" fill="#ff0000"/>
<rect x="250" y="650" width="1" height="5" fill="#ff0000"/>
<rect x="257" y="647" width="1" height="8" fill="#ff0000"/>
<rect x="264" y="647" width="1" height="8" fill="#ff0000"/>
<rect x="271" y="648" width="1" height="7" fill="#ff0000"/>
<rect x="278" y="648" width="1" height="7" fill="#ff0000"/>
<rect x="285" y="651" width="1" height="4" fill="#ff0000"/>
<rect x="292" y="650" width="1" height="5" fill="#ff0000"/>
<rect x="299" y="652" width="1" height="3" fill="#ff0000"/>
<rect x="306" y="653" width="1" height="2" fill="#ff0000"/>
<rect x="313" y="650" width="1" height="5" fill="#ff0000"/>
<rect x="320" y="648" width="1" height="7" fill="#ff0000"/>
<rect x="327" y="648" width="1" height="7" fill="#ff0000"/>
<rect x="334" y="646" width="1" height="9" fill="#ff0000"/>
<rect x="341" y="642" width="1" height="13" fill="#ff0000"/>
<rect x="348" y="644" width="1" height="11" fill="#ff0000"/>
<rect x="355" y="647" width="1" height="8" fill="#ff0000"/>
<rect x="362" y="653" width="1" height="2" fill="#ff0000"/>
<rect x="369" y="654" width="1" height="3" fill="#008000"/>
<rect x="376" y="654" width="1" height="5" fill="#008000"/>
<rect x="383" y="654" width="1" height="6" fill="#008000"/>
<rect x="390" y="654" width="1" height="7" fill="#008000"/>
<rect x="397" y="654" width="1" height="5" fill="#008000"/>
<rect x="404" y="654" width="1" height="4" fill="#008000"/>
<rect x="411" y="654" width="1" height="1" fill="#008000"/>
<rect x="425" y="652" width="1" height="3" fill="#ff0000"/>
<rect x="432" y="651" width="1" height="4" fill="#ff0000"/>
<rect x="439" y="650" width="1" height="5" fill="#ff0000"/>
<rect x="446" y="650" width="1" height="5" fill="#ff0000"/>
<rect x="453" y="650" width="1" height="5" fill="#ff0000"/>
<rect x="460" y="653" width="1" height="2" fill="#ff0000"/>
<rect x="467" y="654" width="1" height="1" fill="#008000"/>
<rect x="474" y="654" width="1" height="1" fill="#008000"/>
<rect x="481" y="653" width="1" height="2" fill="#ff0000"/>
<rect x="488" y="652" width="1" height="3" fill="#ff0000"/>
<rect x="495" y="651" width="1" height="4" fill="#ff0000"/>
<rect x="502" y="653" width="1" height="2" fill="#ff0000"/>
<rect x="509" y="653" width="1" height="2" fill="#ff0000"/>
<rect x="523" y="653" width="1" height="2" fill="#ff0000"/>
<rect x="530" y="651" width="1" height="4" fill="#ff0000"/>
<rect x="537" y="647" width="1" height="8" fill="#ff0000"/>
<rect x="544" y="642" width="1" height="13" fill="#ff0000"/>
<rect x="551" y="632" width="1" height="23" fill="#ff0000"/>
<rect x="558" y="627" width="1" height="28" fill="#ff0000"/>
<rect x="565" y="625" width="1" height="30" fill="#ff0000"/>
<rect x="572" y="623" width="1" height="32" fill="#ff0000"/>
<rect x="579" y="627" width="1" height="28" fill="#ff0000"/>
<rect x="586" y="625" width="1" height="30" fill="#ff0000"/>
<rect x="593" y="627" width="1" height="28" fill="#ff0000"/>
<rect x="600" y="631" width="1" height="24" fill="#ff0000"/>
<rect x="607" y="639" width="1" height="16" fill="#ff0000"/>
<rect x="614" y="645" width="1" height="10" fill="#ff0000"/>
<rect x="621" y="645" width="1" height="10" fill="#ff0000"/>
<rect x="628" y="647" width="1" height="8" fill="#ff0000"/>
<rect x="635" y="650" width="1" height="5" fill="#ff0000"/>
<rect x="649" y="654" width="1" height="1" fill="#008000"/>
<rect x="670" y="654" width="1" height="1" fill="#008000"/>
<rect x="677" y="654" width="1" height="4" fill="#008000"/>
<rect x="684" y="654" width="1" height="5" fill="#008000"/>
<rect x="691" y="654" width="1" height="8" fill="#008000"/>
<rect x="698" y="654" width="1" height="13" fill="#008000"/>
<rect x="705" y="654" width="1" height="16" fill="#008000"/>
<rect x="712" y="654" width="1" height="19" fill="#008000"/>
<rect x="719" y="654" width="1" height="18" fill="#008000"/>
<rect x="726" y="654" width="1" height="15" fill="#008000"/>
<rect x="733" y="654" width="1" height="8" fill="#008000"/>
<rect x="740" y="654" width="1" height="1" fill="#008000"/>
<rect x="747" y="649" width="1" height="6" fill="#ff0000"/>
<rect x="754" y="643" width="1" height="12" fill="#ff0000"/>
<rect x="761" y="640" width="1" height="15" fill="#ff0000"/>
<rect x="768" y="641" width="1" height="14" fill="#ff0000"/>
<rect x="775" y="644" width="1" height="11" fill="#ff0000"/>
<rect x="782" y="644" width="1" height="11" fill="#ff0000"/>
<rect x="789" y="645" width="1" height="10" fill="#ff0000"/>
<rect x="796" y="652" width="1" height="3" fill="#ff0000"/>
<rect x="803" y="654" width="1" height="1" fill="#008000"/>
<rect x="810" y="654" width="1" height="3" fill="#008000"/>
<rect x="817" y="654" width="1" height="3" fill="#008000"/>
<rect x="824" y="654" width="1" height="9" fill="#008000"/>
<rect x="831" y="654" width="1" height="10" fill="#008000"/>
<rect x="838" y="654" width="1" height="7" fill="#008000"/>
<rect x="845" y="654" width="1" height="4" fill="#008000"/>
<rect x="852" y="654" width="1" height="3" fill="#008000"/>
<rect x="859" y="654" width="1" height="1" fill="#008000"/>
<rect x="873" y="652" width="1" height="3" fill="#ff0000"/>
<rect x="880" y="650" width="1" height="5" fill="#ff0000"/>
<rect x="887" y="652" width="1" height="3" fill="#ff0000"/>
<rect x="901" y="654" width="1" height="3" fill="#008000"/>
<rect x="908" y="654" width="1" height="4" fill="#008000"/>
<rect x="915" y="654" width="1" height="7" fill="#008000"/>
<rect x="922" y="654" width="1" height="12" fill="#008000"/>
<rect x="929" y="654" width="1" height="13" fill="#008000"/>
<rect x="936" y="654" width="1" height="15" fill="#008000"/>
<rect x="943" y="654" width="1" height="18" fill="#008000"/>
<rect x="950" y="654" width="1" height="23" fill="#008000"/>
<rect x="957" y="654" width="1" height="26" fill="#008000"/>
<rect x="964" y="654" width="1" height="27" fill="#008000"/>
<rect x="971" y="654" width="1" height="22" fill="#008000"/>
<rect x="978" y="654" width="1" height="12" fill="#008000"/>
<rect x="985" y="654" width="1" height="3" fill="#008000"/>
<rect x="992" y="648" width="1" height="7" fill="#ff0000"/>
<rect x="999" y="641" width="1" height="14" fill="#ff0000"/>
<rect x="1006" y="638" width="1" height="17" fill="#ff0000"/>
<rect x="1013" y="639" width="1" height="16" fill="#ff0000"/>
<rect x="1020" y="639" width="1" height="16" fill="#ff0000"/>
<rect x="1027" y="642" width="1" height="13" fill="#ff0000"/>
<rect x="1034" y="645" width="1" height="10" fill="#ff0000"/>
<rect x="1041" y="648" width="1" height="7" fill="#ff0000"/>
<rect x="1048" y="650" width="1" height="5" fill="#ff0000"/>
<rect x="1055" y="653" width="1" height="2" fill="#ff0000"/>
<rect x="1069" y="654" width="1" height="1" fill="#008000"/>
<rect x="1076" y="654" width="1" height="3" fill="#008000"/>
<rect x="1083" y="654" width="1" height="4" fill="#008000"/>
<rect x="1090" y="654" width="1" height="6" fill="#008000"/>
<rect x="1097" y="654" width="1" height="6" fill="#008000"/>
<rect x="1104" y="654" width="1" height="7" fill="#008000"/>
<rect x="1111" y="654" width="1" height="7" fill="#008000"/>
<rect x="1118" y="654" width="1" height="8" fill="#008000"/>
<rect x="1125" y="654" width="1" height="8" fill="#008000"/>
<rect x="1132" y="654" width="1" height="8" fill="#008000"/>
<rect x="1139" y="654" width="1" height="8" fill="#008000"/>
<rect x="1146" y="654" width="1" height="8" fill="#008000"/>
<rect x="1153" y="654" width="1" height="8" fill="#008000"/>
<rect x="1160" y="654" width="1" height="8" fill="#008000"/>
<rect x="1167" y="654" width="1" height="7" fill="#008000"/>
<rect x="1174" y="654" width="1" height="7" fill="#008000"/>
<rect x="1181" y="654" width="1" height="7" fill="#008000"/>
<rect x="1188" y="654" width="1" height="7" fill="#008000"/>
<rect x="1195" y="654" width="1" height="6" fill="#008000"/>
<rect x="1202" y="654" width="1" height="6" fill="#008000"/>
<rect x="1209" y="654" width="1" height="6" fill="#008000"/>
<rect x="1216" y="654" width="1" height="5" fill="#008000"/>
<rect x="1223" y="654" width="1" height="5" fill="#008000"/>
<rect x="1230" y="654" width="1" height="5" fill="#008000"/>
<rect x="1237" y="654" width="1" height="5" fill="#008000"/>
<rect x="356" y="161" width="1" height="363" fill="#0000ff"/>
<rect x="499" y="161" width="1" height="363" fill="#008080"/>
<rect x="641" y="161" width="1" height="363" fill="#800080"/>
<rect x="1104" y="161" width="1" height="363" fill="#ff0000"/>
<line x1="1031" y1="203.5" x2="1241" y2="203.5" stroke="#808080" stroke-width="1" stroke-dasharray="5 2"/>
</g>
<path d="M222.5 497 L241 491.5" stroke="#0000ff" fill="none" stroke-width="1" shape-rendering="crispEdges"/>
<path d="M1027.5 178.5 L1048 183.5" stroke="#0000ff" fill="none" stroke-width="1" shape-rendering="crispEdges"/>
<path d="M97.500 158H105.500L101.500 162.500Z" fill="#000"/>
<polyline points="75.1,636.3 84.9,641.6 93.4,644.1 101.8,648.3 110.3,653.4 118.8,660.5 125.5,663.1 132.3,664.8 139.1,666.5 145.8,667.3 152.6,669.3 159.4,670.3 166.1,671.5 171.2,669.0 178.0,665.9 186.4,664.8 196.6,664.8 203.4,665.1 211.8,667.3 225.4,667.3 233.8,665.9 242.3,663.9 250.7,661.4 259.2,659.2 267.7,658.0 271.0,657.5 281.2,657.5 284.5,658.3 289.6,657.5 307.4,657.5 311.6,655.8 317.5,654.6 325.1,653.8 330.2,652.1 335.3,650.0 340.4,647.8 345.5,646.7 350.5,646.7 355.6,647.8 362.4,650.4 369.1,652.4 375.9,654.3 382.7,655.5 389.4,656.3 406.4,656.3 414.8,655.1 423.3,653.4 430.1,652.1 436.8,650.4 450.4,650.0 453.7,649.0 458.8,650.7 463.9,652.1 470.7,652.4 474.0,652.9 480.8,651.2 487.5,649.5 512.9,649.5 518.0,648.7 524.8,647.8 531.5,647.3 538.3,643.6 544.2,641.1 548.5,635.1 553.5,629.2 558.6,625.8 565.4,620.8 572.1,616.2 578.9,614.5 585.7,611.1 592.4,607.2 599.2,606.0 604.3,607.2 609.4,608.9 614.4,610.3 619.5,609.8 626.3,609.4 634.7,609.4 640.7,611.1 666.9,612.3 673.7,614.0 677.0,614.5 687.2,617.4 699.0,623.3 710.8,629.7 717.6,631.4 727.8,631.4 734.5,628.4 741.3,625.0 748.1,620.8 754.8,617.4 761.6,613.5 768.4,612.3 778.5,612.0 785.3,610.6 790.4,610.6 795.4,613.5 802.2,615.2 809.0,617.0 817.4,617.4 825.9,621.6 832.7,623.6 841.1,622.0 854.7,621.1 863.1,619.9 869.9,617.9 878.4,616.2 880.0,616.2 886.8,616.2 893.5,618.6 907.1,621.3 922.3,627.5 930.8,629.7 940.9,634.3 951.1,642.8 957.8,646.7 964.6,651.2 971.4,650.4 981.5,645.6 990.0,638.5 998.4,631.8 1005.2,628.4 1012.0,626.4 1020.4,624.5 1028.9,624.5 1031.0,624.5 1037.8,624.5 1051.3,625.5 1064.8,627.5 1078.4,630.1 1091.9,632.6 1105.5,635.1 1119.0,637.7 1132.5,639.4 1146.1,641.4 1159.6,642.4 1173.1,644.5 1186.7,645.6 1200.2,646.7 1213.7,647.5 1227.3,648.7 1237.1,649.5" fill="none" stroke="#000" stroke-width="1" shape-rendering="crispEdges"/>
<polyline points="75.1,639.4 84.9,639.9 93.4,640.6 101.8,642.8 110.3,645.3 118.8,649.0 127.2,652.1 135.7,655.5 144.1,658.0 152.6,660.5 161.1,663.1 169.5,665.3 179.7,665.6 203.4,664.8 211.8,665.9 220.3,666.8 233.8,665.9 245.7,665.3 254.1,663.9 262.6,662.6 271.0,661.4 279.5,660.2 287.9,660.2 296.4,658.8 308.2,658.8 315.0,657.5 325.1,656.3 335.3,655.1 345.5,652.9 352.2,651.7 359.0,651.6 372.5,652.1 386.1,652.9 394.5,654.3 423.3,654.3 436.8,653.4 447.0,652.4 457.1,652.1 470.7,652.9 474.0,652.9 484.2,651.2 499.4,650.7 516.3,650.4 529.8,649.5 541.7,647.3 550.1,643.6 558.6,639.4 565.4,636.8 572.1,633.5 578.9,629.2 585.7,625.8 592.4,622.0 599.2,618.7 606.0,616.9 612.7,615.4 619.5,614.3 626.3,613.2 633.1,612.5 643.2,612.3 666.9,612.3 677.0,613.2 687.2,613.5 697.3,616.2 707.5,619.1 717.6,622.0 727.8,625.0 734.5,625.5 744.7,624.5 754.8,622.5 765.0,619.9 775.1,617.9 787.0,615.4 798.8,615.2 812.4,615.4 820.8,616.5 829.3,618.6 837.7,619.6 849.6,619.9 859.7,620.8 869.9,620.3 880.0,619.6 886.8,618.2 896.9,618.2 910.5,619.4 922.3,621.6 934.1,625.0 944.3,627.5 956.1,633.5 966.3,638.5 978.1,641.4 984.9,641.4 995.1,639.4 1006.9,636.0 1018.7,632.6 1028.9,630.6 1031.0,630.1 1037.8,628.4 1064.8,628.4 1078.4,628.9 1091.9,629.6 1105.5,631.8 1119.0,634.0 1132.5,636.0 1146.1,638.0 1159.6,639.4 1173.1,640.2 1186.7,642.3 1200.2,644.1 1213.7,645.3 1227.3,646.1 1237.1,647.3" fill="none" stroke="#0000ff" stroke-width="1" shape-rendering="crispEdges"/>
<text x="5.5" y="148" fill="#0000ff" font-size="12" font-family="'Liberation Serif','Noto Serif CJK SC',serif" font-weight="600" textLength="30.5" lengthAdjust="spacingAndGlyphs">日K线</text>
<text x="1138.5" y="156" fill="#0000ff" font-size="13" font-family="'Liberation Serif','Noto Serif CJK SC',serif" textLength="98.5" lengthAdjust="spacingAndGlyphs" xml:space="preserve">1A0001 上证指数</text>
<text x="5" y="603.3" fill="#0000ff" font-size="14" font-family="'Liberation Serif','Noto Serif CJK SC',serif" font-weight="600" textLength="27" lengthAdjust="spacingAndGlyphs">MACD</text>
<text x="73" y="140.6" fill="#a0a0a0" font-size="8.6" font-family="'Liberation Sans',sans-serif" textLength="20.3" lengthAdjust="spacingAndGlyphs">04-18</text>
<text x="132" y="140.6" fill="#a0a0a0" font-size="8.6" font-family="'Liberation Sans',sans-serif" textLength="20.3" lengthAdjust="spacingAndGlyphs">05-06</text>
<text x="202" y="140.6" fill="#a0a0a0" font-size="8.6" font-family="'Liberation Sans',sans-serif" textLength="20.3" lengthAdjust="spacingAndGlyphs">05-20</text>
<text x="272" y="140.6" fill="#a0a0a0" font-size="8.6" font-family="'Liberation Sans',sans-serif" textLength="20.3" lengthAdjust="spacingAndGlyphs">06-04</text>
<text x="342" y="140.6" fill="#a0a0a0" font-size="8.6" font-family="'Liberation Sans',sans-serif" textLength="20.3" lengthAdjust="spacingAndGlyphs">06-18</text>
<text x="412" y="140.6" fill="#a0a0a0" font-size="8.6" font-family="'Liberation Sans',sans-serif" textLength="20.3" lengthAdjust="spacingAndGlyphs">07-02</text>
<text x="482" y="140.6" fill="#a0a0a0" font-size="8.6" font-family="'Liberation Sans',sans-serif" textLength="20.3" lengthAdjust="spacingAndGlyphs">07-16</text>
<text x="552" y="140.6" fill="#a0a0a0" font-size="8.6" font-family="'Liberation Sans',sans-serif" textLength="20.3" lengthAdjust="spacingAndGlyphs">07-30</text>
<text x="622" y="140.6" fill="#a0a0a0" font-size="8.6" font-family="'Liberation Sans',sans-serif" textLength="20.3" lengthAdjust="spacingAndGlyphs">08-13</text>
<text x="692" y="140.6" fill="#a0a0a0" font-size="8.6" font-family="'Liberation Sans',sans-serif" textLength="20.3" lengthAdjust="spacingAndGlyphs">08-27</text>
<text x="762" y="140.6" fill="#a0a0a0" font-size="8.6" font-family="'Liberation Sans',sans-serif" textLength="20.3" lengthAdjust="spacingAndGlyphs">09-11</text>
<text x="832" y="140.6" fill="#a0a0a0" font-size="8.6" font-family="'Liberation Sans',sans-serif" textLength="20.3" lengthAdjust="spacingAndGlyphs">09-25</text>
<text x="902" y="140.6" fill="#a0a0a0" font-size="8.6" font-family="'Liberation Sans',sans-serif" textLength="20.3" lengthAdjust="spacingAndGlyphs">10-16</text>
<text x="972" y="140.6" fill="#a0a0a0" font-size="8.6" font-family="'Liberation Sans',sans-serif" textLength="20.3" lengthAdjust="spacingAndGlyphs">10-30</text>
<text x="1042" y="140.6" fill="#a0a0a0" font-size="8.6" font-family="'Liberation Sans',sans-serif" textLength="20.3" lengthAdjust="spacingAndGlyphs">11-13</text>
<text x="1112" y="140.6" fill="#a0a0a0" font-size="8.6" font-family="'Liberation Sans',sans-serif" textLength="20.3" lengthAdjust="spacingAndGlyphs">11-27</text>
<text x="1182" y="140.6" fill="#a0a0a0" font-size="8.6" font-family="'Liberation Sans',sans-serif" textLength="20.3" lengthAdjust="spacingAndGlyphs">12-11</text>
<text x="15.5" y="521" fill="#404040" font-size="12" font-family="'IPAGothic','Liberation Mono',monospace" textLength="53.5" lengthAdjust="spacingAndGlyphs">1951.2389</text>
<text x="15.5" y="545" fill="#404040" font-size="12" font-family="'IPAGothic','Liberation Mono',monospace" textLength="53.5" lengthAdjust="spacingAndGlyphs">236918919</text>
<text x="15.5" y="561" fill="#404040" font-size="12" font-family="'IPAGothic','Liberation Mono',monospace" textLength="53.5" lengthAdjust="spacingAndGlyphs">157945946</text>
<text x="21.5" y="577" fill="#404040" font-size="12" font-family="'IPAGothic','Liberation Mono',monospace" textLength="47.5" lengthAdjust="spacingAndGlyphs">78972973</text>
<text x="39.5" y="614.5" fill="#404040" font-size="12" font-family="'IPAGothic','Liberation Mono',monospace" textLength="29.5" lengthAdjust="spacingAndGlyphs">40.17</text>
<text x="39.5" y="632.5" fill="#404040" font-size="12" font-family="'IPAGothic','Liberation Mono',monospace" textLength="29.5" lengthAdjust="spacingAndGlyphs">23.80</text>
<text x="45.5" y="650.5" fill="#404040" font-size="12" font-family="'IPAGothic','Liberation Mono',monospace" textLength="23.5" lengthAdjust="spacingAndGlyphs">7.43</text>
<text x="39.5" y="668.5" fill="#404040" font-size="12" font-family="'IPAGothic','Liberation Mono',monospace" textLength="29.5" lengthAdjust="spacingAndGlyphs">-8.94</text>
<text x="358.5" y="182" fill="#0000ff" font-size="12" font-family="'IPAGothic','Liberation Mono',monospace" textLength="29.5" lengthAdjust="spacingAndGlyphs">1.382</text>
<text x="501" y="182" fill="#008080" font-size="12" font-family="'IPAGothic','Liberation Mono',monospace" textLength="17.5" lengthAdjust="spacingAndGlyphs">1.5</text>
<text x="643" y="182" fill="#800080" font-size="12" font-family="'IPAGothic','Liberation Mono',monospace" textLength="29.5" lengthAdjust="spacingAndGlyphs">1.618</text>
<text x="1106" y="182" fill="#ff0000" font-size="12" font-family="'IPAGothic','Liberation Mono',monospace" textLength="5.5" lengthAdjust="spacingAndGlyphs">2</text>
<text x="358.5" y="478.8" fill="#0000ff" font-size="12" font-family="'IPAGothic','Liberation Mono',monospace" textLength="17.5" lengthAdjust="spacingAndGlyphs">239</text>
<text x="501" y="478.8" fill="#008080" font-size="12" font-family="'IPAGothic','Liberation Mono',monospace" textLength="17.5" lengthAdjust="spacingAndGlyphs">260</text>
<text x="643" y="478.8" fill="#800080" font-size="12" font-family="'IPAGothic','Liberation Mono',monospace" textLength="17.5" lengthAdjust="spacingAndGlyphs">280</text>
<text x="1106" y="478.8" fill="#ff0000" font-size="12" font-family="'IPAGothic','Liberation Mono',monospace" textLength="17.5" lengthAdjust="spacingAndGlyphs">346</text>
<text x="243" y="494" fill="#0000ff" font-size="11" font-family="'DejaVu Sans',sans-serif" textLength="58" lengthAdjust="spacingAndGlyphs">1991.0601</text>
<text x="1048" y="194" fill="#0000ff" font-size="11" font-family="'DejaVu Sans',sans-serif" textLength="58.5" lengthAdjust="spacingAndGlyphs">2454.4199</text>
<text x="72.5" y="386.3" fill="#ff0000" font-size="11" font-family="'DejaVu Sans','Noto Sans CJK SC',sans-serif" textLength="56" lengthAdjust="spacingAndGlyphs">9点8.73%</text>
<text x="77.5" y="603" fill="#000" font-size="12" font-family="'Liberation Sans',sans-serif" textLength="43.7" lengthAdjust="spacingAndGlyphs">DIF=4.89</text>
<text x="148" y="603" fill="#0000ff" font-size="12" font-family="'Liberation Sans',sans-serif" textLength="49" lengthAdjust="spacingAndGlyphs">DEA=6.89</text>
<text x="219.5" y="603" fill="#ff00ff" font-size="12" font-family="'Liberation Sans',sans-serif" textLength="61" lengthAdjust="spacingAndGlyphs">MACD=-4.00</text>
</svg>
</body></html>
